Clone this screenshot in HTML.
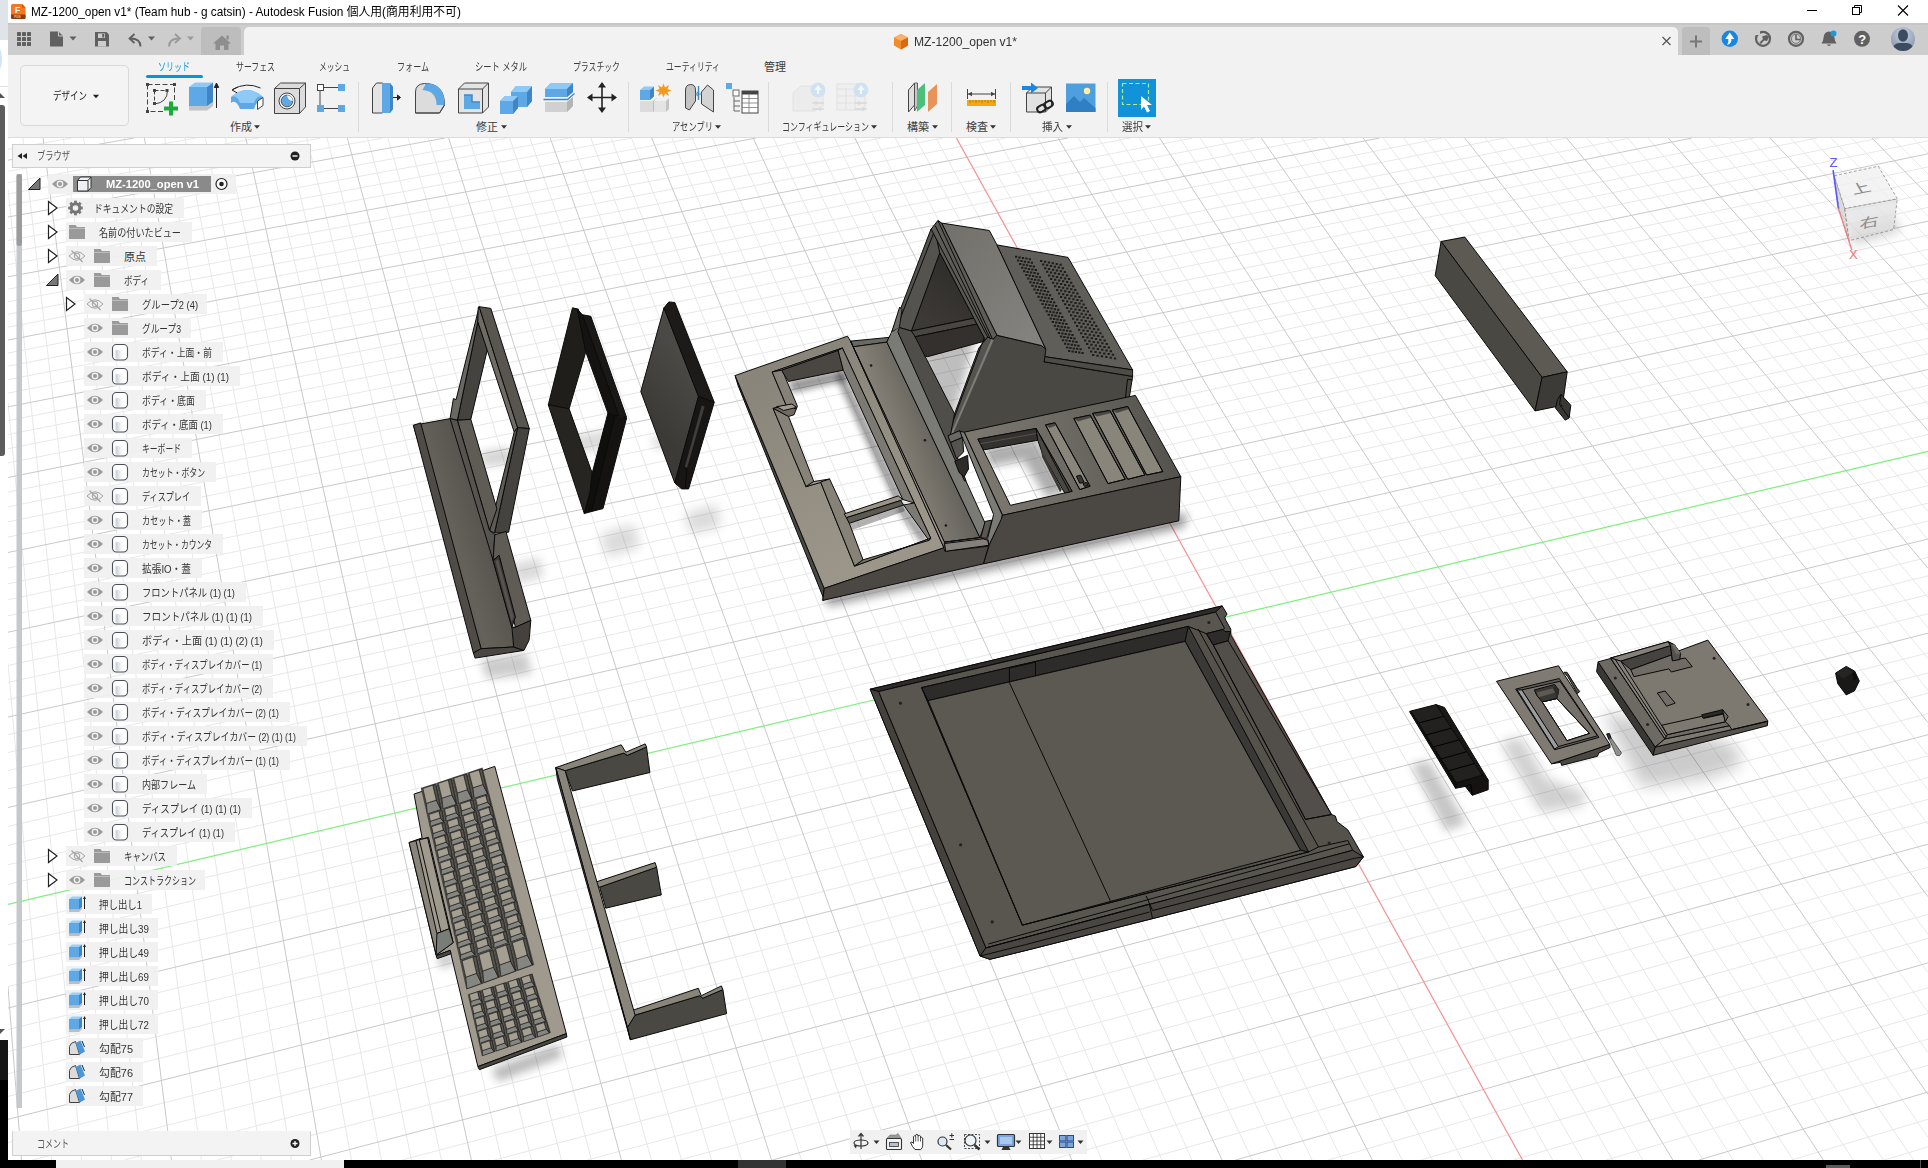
<!DOCTYPE html>
<html lang="ja"><head><meta charset="utf-8"><title>MZ-1200_open v1 - Autodesk Fusion</title>
<style>
*{box-sizing:border-box;margin:0;padding:0}
html,body{width:1928px;height:1168px;overflow:hidden;background:#fff}
body{font-family:"Liberation Sans","Noto Sans CJK JP",sans-serif;font-size:12px;color:#333;position:relative}
.abs{position:absolute}
.t{position:absolute;white-space:nowrap;transform-origin:0 50%;line-height:16px;height:16px}
#title{left:8px;top:0;width:1920px;height:23px;background:#fff}
#tabbar{left:8px;top:23px;width:1920px;height:32px;background:#cdcdcd}
#toolbar{left:8px;top:55px;width:1920px;height:83px;background:#f2f2f2;border-bottom:1px solid #dcdcdc}
.sep{position:absolute;top:82px;width:1px;height:50px;background:#dadada}
.tab{font-size:11px;color:#3c3c3c}
.lbl{font-size:11px;color:#3c3c3c}

.rowbg{position:absolute;height:20px;background:rgba(240,240,240,.92)}
.bt{font-size:11px;color:#333}
</style></head>
<body>
<svg class="abs" style="left:0;top:0" width="1928" height="1168" viewBox="0 0 1928 1168"><defs><filter id="b3" x="-30%" y="-30%" width="160%" height="160%"><feGaussianBlur stdDeviation="3"/></filter><filter id="b4" x="-30%" y="-30%" width="160%" height="160%"><feGaussianBlur stdDeviation="4"/></filter><filter id="b5" x="-30%" y="-30%" width="160%" height="160%"><feGaussianBlur stdDeviation="5"/></filter><filter id="b6" x="-30%" y="-30%" width="160%" height="160%"><feGaussianBlur stdDeviation="6"/></filter><filter id="b8" x="-30%" y="-30%" width="160%" height="160%"><feGaussianBlur stdDeviation="8"/></filter><clipPath id="vpc"><rect x="8" y="138" width="1920" height="1022"/></clipPath></defs><g clip-path="url(#vpc)"><path d="M8.0,663.4L51.5,1160.0M8.0,403.1L81.5,1160.0M8.0,189.3L111.4,1160.0M22.8,138.0L141.4,1160.0M63.3,138.0L201.4,1160.0M83.6,138.0L231.4,1160.0M103.9,138.0L261.4,1160.0M124.2,138.0L291.4,1160.0M164.7,138.0L351.4,1160.0M185.0,138.0L381.4,1160.0M205.3,138.0L411.4,1160.0M225.5,138.0L441.4,1160.0M266.1,138.0L501.4,1160.0M286.4,138.0L531.4,1160.0M306.7,138.0L561.4,1160.0M327.0,138.0L591.4,1160.0M367.5,138.0L651.4,1160.0M387.8,138.0L681.5,1160.0M408.1,138.0L711.5,1160.0M428.4,138.0L741.5,1160.0M469.0,138.0L801.5,1160.0M489.3,138.0L831.6,1160.0M509.6,138.0L861.6,1160.0M529.9,138.0L891.6,1160.0M570.5,138.0L951.7,1160.0M590.8,138.0L981.7,1160.0M611.1,138.0L1011.7,1160.0M631.4,138.0L1041.8,1160.0M672.0,138.0L1101.8,1160.0M692.3,138.0L1131.9,1160.0M712.6,138.0L1161.9,1160.0M732.9,138.0L1192.0,1160.0M773.5,138.0L1252.1,1160.0M793.8,138.0L1282.1,1160.0M814.1,138.0L1312.2,1160.0M834.5,138.0L1342.2,1160.0M875.1,138.0L1402.3,1160.0M895.4,138.0L1432.4,1160.0M915.7,138.0L1462.4,1160.0M936.0,138.0L1492.5,1160.0M976.7,138.0L1552.6,1160.0M997.0,138.0L1582.7,1160.0M1017.3,138.0L1612.7,1160.0M1037.7,138.0L1642.8,1160.0M1078.3,138.0L1703.0,1160.0M1098.6,138.0L1733.0,1160.0M1119.0,138.0L1763.1,1160.0M1139.3,138.0L1793.2,1160.0M1180.0,138.0L1853.3,1160.0M1200.3,138.0L1883.4,1160.0M1220.6,138.0L1913.5,1160.0M1241.0,138.0L1928.0,1137.3M1281.6,138.0L1928.0,1052.8M1302.0,138.0L1928.0,1012.2M1322.3,138.0L1928.0,972.7M1342.6,138.0L1928.0,934.2M1383.3,138.0L1928.0,860.1M1403.7,138.0L1928.0,824.4M1424.0,138.0L1928.0,789.7M1444.4,138.0L1928.0,755.7M1485.1,138.0L1928.0,690.3M1505.4,138.0L1928.0,658.7M1525.8,138.0L1928.0,627.9M1546.1,138.0L1928.0,597.7M1586.8,138.0L1928.0,539.5M1607.2,138.0L1928.0,511.3M1627.5,138.0L1928.0,483.8M1647.9,138.0L1928.0,456.9M1688.6,138.0L1928.0,404.7M1709.0,138.0L1928.0,379.5M1729.3,138.0L1928.0,354.7M1749.7,138.0L1928.0,330.5M1790.4,138.0L1928.0,283.5M1810.8,138.0L1928.0,260.7M1831.2,138.0L1928.0,238.4M1851.5,138.0L1928.0,216.5M1892.3,138.0L1928.0,174.0M1912.7,138.0L1928.0,153.3M8.0,138.3L9.8,138.0M8.0,149.2L71.9,138.0M8.0,171.3L196.3,138.0M8.0,182.6L258.5,138.0M8.0,193.9L320.7,138.0M8.0,205.4L382.9,138.0M8.0,228.7L507.4,138.0M8.0,240.5L569.6,138.0M8.0,252.5L631.9,138.0M8.0,264.6L694.2,138.0M8.0,289.2L818.7,138.0M8.0,301.7L881.0,138.0M8.0,314.3L943.4,138.0M8.0,327.1L1005.7,138.0M8.0,353.0L1130.4,138.0M8.0,366.2L1192.7,138.0M8.0,379.6L1255.1,138.0M8.0,393.1L1317.4,138.0M8.0,420.6L1442.2,138.0M8.0,434.5L1504.6,138.0M8.0,448.7L1567.1,138.0M8.0,463.0L1629.5,138.0M8.0,492.1L1754.4,138.0M8.0,506.9L1816.8,138.0M8.0,521.9L1879.3,138.0M8.0,537.1L1928.0,140.8M8.0,568.0L1928.0,167.0M8.0,583.8L1928.0,180.3M8.0,599.7L1928.0,193.8M8.0,615.8L1928.0,207.4M8.0,648.7L1928.0,235.2M8.0,665.5L1928.0,249.4M8.0,682.4L1928.0,263.7M8.0,699.6L1928.0,278.3M8.0,734.6L1928.0,307.9M8.0,752.5L1928.0,323.0M8.0,770.6L1928.0,338.3M8.0,788.9L1928.0,353.8M8.0,826.4L1928.0,385.4M8.0,845.4L1928.0,401.6M8.0,864.8L1928.0,417.9M8.0,884.4L1928.0,434.5M8.0,924.4L1928.0,468.4M8.0,944.9L1928.0,485.7M8.0,965.6L1928.0,503.2M8.0,986.6L1928.0,521.0M8.0,1029.6L1928.0,557.3M8.0,1051.5L1928.0,575.9M8.0,1073.8L1928.0,594.7M8.0,1096.4L1928.0,613.8M8.0,1142.6L1928.0,652.9M32.3,1160.0L1928.0,672.9M124.7,1160.0L1928.0,693.2M217.2,1160.0L1928.0,713.7M402.2,1160.0L1928.0,755.9M494.7,1160.0L1928.0,777.5M587.3,1160.0L1928.0,799.4M679.8,1160.0L1928.0,821.6M865.0,1160.0L1928.0,867.2M957.6,1160.0L1928.0,890.6M1050.2,1160.0L1928.0,914.3M1142.8,1160.0L1928.0,938.4M1328.1,1160.0L1928.0,987.9M1420.8,1160.0L1928.0,1013.3M1513.5,1160.0L1928.0,1039.1M1606.2,1160.0L1928.0,1065.3M1791.7,1160.0L1928.0,1119.2M1884.4,1160.0L1928.0,1146.8" stroke="#e8e8e8" stroke-width="1" fill="none"/><path d="M8.0,987.0L21.5,1160.0M43.1,138.0L171.4,1160.0M144.4,138.0L321.4,1160.0M245.8,138.0L471.4,1160.0M347.3,138.0L621.4,1160.0M448.7,138.0L771.5,1160.0M550.2,138.0L921.6,1160.0M651.7,138.0L1071.8,1160.0M753.2,138.0L1222.0,1160.0M854.8,138.0L1372.3,1160.0M1058.0,138.0L1672.9,1160.0M1159.6,138.0L1823.3,1160.0M1261.3,138.0L1928.0,1094.5M1363.0,138.0L1928.0,896.7M1464.7,138.0L1928.0,722.6M1566.5,138.0L1928.0,568.3M1668.3,138.0L1928.0,430.5M1770.1,138.0L1928.0,306.8M1871.9,138.0L1928.0,195.0M8.0,160.2L134.1,138.0M8.0,217.0L445.2,138.0M8.0,276.8L756.4,138.0M8.0,340.0L1068.0,138.0M8.0,406.8L1379.8,138.0M8.0,477.5L1691.9,138.0M8.0,552.5L1928.0,153.8M8.0,632.2L1928.0,221.2M8.0,717.0L1928.0,293.0M8.0,807.5L1928.0,369.5M8.0,1008.0L1928.0,539.0M8.0,1119.3L1928.0,633.2M309.7,1160.0L1928.0,734.7M772.4,1160.0L1928.0,844.2M1235.5,1160.0L1928.0,962.9M1698.9,1160.0L1928.0,1092.0" stroke="#c9c9c9" stroke-width="1" fill="none"/><path d="M8.0,904.3L1928.0,451.3" stroke="#7df07d" stroke-width="1.2"/><path d="M956.4,138.0L1522.5,1160.0" stroke="#f79090" stroke-width="1.2"/><polygon points="870.2,689.2 1222.2,605.9 1227.1,614.1 1224.8,617.3 1225.8,620.3 1230.8,629.2 1230.8,634.9 1331.5,814.5 1335.4,816.1 1337.1,821.7 1347.8,829.8 1363.4,856.8 1355.9,866.5 1152.6,918.6 1025.7,950.5 989.9,959.3 980.1,956.0" fill="#55524c" stroke="#0a0a0a" stroke-width="1" stroke-linejoin="round"/>
<polygon points="870.2,689.2 1222.2,605.9 1215.7,612.1 878.6,691.5" fill="#2e2c2a" stroke="#0a0a0a" stroke-width="1" stroke-linejoin="round"/>
<polygon points="870.2,689.2 878.6,691.5 986.0,947.9 980.1,956.0" fill="#45423e" stroke="#0a0a0a" stroke-width="1" stroke-linejoin="round"/>
<polygon points="878.6,691.5 1215.7,612.1 1224.5,628.1 1223.3,629.4 1206.3,633.6 1188.4,626.4 921.6,687.6 1022.4,925.1 1308.7,851.9 1318.5,847.0 1347.8,840.5 1352.7,850.3 986.0,947.9" fill="#595650" stroke="#0a0a0a" stroke-width="1" stroke-linejoin="round"/>
<polygon points="921.6,687.6 1188.4,626.4 1185.1,641.4 928.1,700.6" fill="#2e2c2a" stroke="#0a0a0a" stroke-width="1" stroke-linejoin="round"/>
<polygon points="1188.4,626.4 1308.7,851.9 1300.6,850.3 1185.1,641.4" fill="#3b3936" stroke="#0a0a0a" stroke-width="1" stroke-linejoin="round"/>
<polygon points="928.1,700.6 1185.1,641.4 1300.6,850.3 1022.4,925.1" fill="#5c5953" stroke="#0a0a0a" stroke-width="1" stroke-linejoin="round"/>
<polyline points="1009.4,682.7 1009.4,668.1 1035.5,662.2 1035.5,676.2" fill="none" stroke="#0a0a0a" stroke-width="1" stroke-linejoin="round"/>
<polyline points="1009.4,682.7 1110.3,900.7" fill="none" stroke="#0a0a0a" stroke-width="1" stroke-linejoin="round"/>
<polyline points="921.6,687.6 1022.4,925.1 1308.7,851.9" fill="none" stroke="#0a0a0a" stroke-width="1" stroke-linejoin="round"/>
<polygon points="1206.3,633.6 1223.3,629.4 1224.8,631.6 1230.3,631.5 1228.2,640.8 1213.3,645.0" fill="#2e2c2a" stroke="#0a0a0a" stroke-width="1" stroke-linejoin="round"/>
<polygon points="1213.3,645.0 1228.2,640.8 1331.5,814.5 1305.5,819.4" fill="#524f4a" stroke="#0a0a0a" stroke-width="1" stroke-linejoin="round"/>
<polyline points="1206.3,633.6 1213.3,645.0 1305.5,819.4 1331.5,814.5" fill="none" stroke="#0a0a0a" stroke-width="1" stroke-linejoin="round"/>
<polyline points="1198.1,629.0 1318.5,847.0" fill="none" stroke="#0a0a0a" stroke-width="1" stroke-linejoin="round"/>
<polygon points="986.0,947.9 1352.7,850.3 1363.4,856.8 1355.9,866.5 1152.6,918.6 1025.7,950.5 989.9,959.3 980.1,956.0" fill="#4a4742" stroke="#0a0a0a" stroke-width="1" stroke-linejoin="round"/>
<polyline points="988.3,944.0 1349.4,843.8" fill="none" stroke="#0a0a0a" stroke-width="1" stroke-linejoin="round"/>
<polyline points="986.0,947.9 1149.3,904.0 1152.6,918.6" fill="none" stroke="#0a0a0a" stroke-width="1" stroke-linejoin="round"/>
<polyline points="1146.1,895.8 1152.6,910.5 1354.3,858.4 1363.4,856.8" fill="none" stroke="#0a0a0a" stroke-width="1" stroke-linejoin="round"/>
<polyline points="980.1,956.0 1025.7,944.6 1149.3,912.1" fill="none" stroke="#0a0a0a" stroke-width="1" stroke-linejoin="round"/>
<circle cx="900.4" cy="703.2" r="1.6" fill="#222"/>
<circle cx="960.6" cy="844.8" r="1.6" fill="#222"/>
<circle cx="992.2" cy="921.9" r="1.6" fill="#222"/>
<circle cx="1208.9" cy="622.5" r="1.6" fill="#222"/>
<circle cx="1329.2" cy="843.1" r="1.6" fill="#222"/>
<defs><linearGradient id="gpan" gradientUnits="userSpaceOnUse" x1="870" y1="420" x2="935" y2="395"><stop offset="0" stop-color="#8e897e"/><stop offset="1" stop-color="#5d5b56"/></linearGradient><linearGradient id="gtop" gradientUnits="userSpaceOnUse" x1="940" y1="225" x2="1050" y2="345"><stop offset="0" stop-color="#71706a"/><stop offset="1" stop-color="#868480"/></linearGradient><linearGradient id="gdeck" gradientUnits="userSpaceOnUse" x1="980" y1="480" x2="1170" y2="440"><stop offset="0" stop-color="#7c7870"/><stop offset=".5" stop-color="#6c6962"/><stop offset="1" stop-color="#55534e"/></linearGradient><linearGradient id="gsur" gradientUnits="userSpaceOnUse" x1="760" y1="380" x2="860" y2="560"><stop offset="0" stop-color="#8a857a"/><stop offset="1" stop-color="#9c968a"/></linearGradient><linearGradient id="gint" gradientUnits="userSpaceOnUse" x1="915" y1="330" x2="970" y2="260"><stop offset="0" stop-color="#3f3c38"/><stop offset="1" stop-color="#2d2b28"/></linearGradient></defs>
<polygon points="827.9,606.5 1184.0,527.3 1187.6,512.9 1166.0,516.5 824.3,595.7" fill="#000" opacity="0.4" filter="url(#b5)"/>
<polygon points="788.0,381.0 843.0,369.0 848.0,380.0 792.0,393.0" fill="#000" opacity="0.4" filter="url(#b3)"/>
<polygon points="842.0,369.0 904.0,499.0 895.0,502.0 836.0,378.0" fill="#000" opacity="0.4" filter="url(#b3)"/>
<polygon points="903.0,504.0 930.0,540.0 921.0,543.0 896.0,508.0" fill="#000" opacity="0.4" filter="url(#b3)"/>
<polygon points="849.0,523.0 903.0,505.0 905.0,511.0 852.0,530.0" fill="#000" opacity="0.3" filter="url(#b2)"/>
<polygon points="983.9,447.6 1037.0,439.1 1064.4,491.3 1047.3,498.2 1023.3,460.5 989.0,466.5" fill="#000" opacity="0.32" filter="url(#b5)"/>
<polygon points="921.4,336.7 979.0,325.9 950.2,430.2 971.8,523.7 943.0,523.7" fill="#000" opacity="0.25" filter="url(#b4)"/>
<polygon points="939.6,252.2 973.9,318.2 911.4,331.0" fill="url(#gint)" stroke="#0a0a0a" stroke-width="1" stroke-linejoin="round"/>
<polygon points="911.4,331.0 973.9,318.2 976.8,324.1 913.9,337.0" fill="#4a4742" stroke="#0a0a0a" stroke-width="1" stroke-linejoin="round"/>
<polygon points="913.9,337.0 976.8,324.1 985.9,340.8 927.6,356.7 919.9,355.0" fill="#33302d" stroke="#0a0a0a" stroke-width="1" stroke-linejoin="round"/>
<polygon points="931.1,228.8 935.3,232.2 940.1,251.9 911.4,331.0 899.4,327.6 891.7,332.2" fill="#55534e" stroke="#0a0a0a" stroke-width="1" stroke-linejoin="round"/>
<polyline points="934.0,232.2 895.6,330.5" fill="none" stroke="#0a0a0a" stroke-width="1" stroke-linejoin="round"/>
<polygon points="891.7,332.2 899.4,327.6 902.0,309.6 899.7,307.0" fill="#6b6a65" stroke="#0a0a0a" stroke-width="1" stroke-linejoin="round"/>
<polygon points="935.3,231.8 991.8,338.0 985.9,340.8 973.9,318.2 939.6,252.2" fill="#5a5853" stroke="#0a0a0a" stroke-width="1" stroke-linejoin="round"/>
<polygon points="931.1,229.1 937.9,220.5 941.8,223.1 997.0,335.3 992.7,339.6 987.6,337.0" fill="#5d5c57" stroke="#0a0a0a" stroke-width="1" stroke-linejoin="round"/>
<polyline points="937.9,220.5 992.7,339.6" fill="none" stroke="#0a0a0a" stroke-width="1" stroke-linejoin="round"/>
<polyline points="935.3,225.7 990.1,338.4" fill="none" stroke="#0a0a0a" stroke-width="1" stroke-linejoin="round"/>
<polygon points="992.7,339.6 997.0,335.3 1041.2,345.5 1047.5,347.0 1046.0,356.7 1044.1,361.8 1132.6,376.4 1129.4,397.1 960.3,434.5 950.2,437.4" fill="#4a4843" stroke="#0a0a0a" stroke-width="1" stroke-linejoin="round"/>
<polyline points="1132.6,380.0 1127.5,379.2 1125.5,397.5" fill="none" stroke="#0a0a0a" stroke-width="1" stroke-linejoin="round"/>
<polygon points="978.9,348.0 987.6,337.0 992.7,339.6 950.2,437.4 943.7,435.6 954.5,413.9" fill="#55534e" stroke="#0a0a0a" stroke-width="1" stroke-linejoin="round"/>
<polyline points="984.0,338.1 949.0,432.0" fill="none" stroke="#0a0a0a" stroke-width="1" stroke-linejoin="round"/>
<polygon points="991.5,339.0 993.6,340.0 951.3,437.4 949.5,436.8" fill="#7d7d78"/>
<polygon points="941.8,223.1 989.3,230.5 997.0,244.9 1045.8,349.0 1041.2,345.5 997.0,335.3" fill="url(#gtop)" stroke="#0a0a0a" stroke-width="1" stroke-linejoin="round"/>
<polygon points="997.0,244.9 1068.0,257.4 1132.6,369.9 1044.9,356.7 1045.8,349.0" fill="#605e59" stroke="#0a0a0a" stroke-width="1" stroke-linejoin="round"/>
<path d="M1015.0,255.8h2.300v2h-2.300zM1018.4,256.4h2.300v2h-2.300zM1021.8,257.0h2.300v2h-2.300zM1025.2,257.6h2.300v2h-2.300zM1028.7,258.2h2.300v2h-2.300zM1017.0,259.5h2.300v2h-2.300zM1020.4,260.1h2.300v2h-2.300zM1023.8,260.7h2.300v2h-2.300zM1027.3,261.3h2.300v2h-2.300zM1030.7,261.8h2.300v2h-2.300zM1019.0,263.1h2.300v2h-2.300zM1022.5,263.7h2.300v2h-2.300zM1025.9,264.3h2.300v2h-2.300zM1029.3,264.9h2.300v2h-2.300zM1032.7,265.5h2.300v2h-2.300zM1021.1,266.7h2.300v2h-2.300zM1024.5,267.3h2.300v2h-2.300zM1027.9,267.9h2.300v2h-2.300zM1031.3,268.5h2.300v2h-2.300zM1034.7,269.1h2.300v2h-2.300zM1023.1,270.3h2.300v2h-2.300zM1026.5,270.9h2.300v2h-2.300zM1030.0,271.5h2.300v2h-2.300zM1033.4,272.1h2.300v2h-2.300zM1036.8,272.7h2.300v2h-2.300zM1025.2,274.0h2.300v2h-2.300zM1028.6,274.5h2.300v2h-2.300zM1032.0,275.1h2.300v2h-2.300zM1035.4,275.7h2.300v2h-2.300zM1038.8,276.3h2.300v2h-2.300zM1027.2,277.6h2.300v2h-2.300zM1030.6,278.2h2.300v2h-2.300zM1034.0,278.7h2.300v2h-2.300zM1037.4,279.3h2.300v2h-2.300zM1040.8,279.9h2.300v2h-2.300zM1029.3,281.2h2.300v2h-2.300zM1032.7,281.8h2.300v2h-2.300zM1036.1,282.3h2.300v2h-2.300zM1039.5,282.9h2.300v2h-2.300zM1042.9,283.5h2.300v2h-2.300zM1031.3,284.8h2.300v2h-2.300zM1034.7,285.4h2.300v2h-2.300zM1038.1,285.9h2.300v2h-2.300zM1041.5,286.5h2.300v2h-2.300zM1044.9,287.1h2.300v2h-2.300zM1033.3,288.4h2.300v2h-2.300zM1036.7,289.0h2.300v2h-2.300zM1040.1,289.6h2.300v2h-2.300zM1043.5,290.1h2.300v2h-2.300zM1046.9,290.7h2.300v2h-2.300zM1035.4,292.1h2.300v2h-2.300zM1038.8,292.6h2.300v2h-2.300zM1042.2,293.2h2.300v2h-2.300zM1045.6,293.7h2.300v2h-2.300zM1048.9,294.3h2.300v2h-2.300zM1037.4,295.7h2.300v2h-2.300zM1040.8,296.2h2.300v2h-2.300zM1044.2,296.8h2.300v2h-2.300zM1047.6,297.3h2.300v2h-2.300zM1051.0,297.9h2.300v2h-2.300zM1039.5,299.3h2.300v2h-2.300zM1042.8,299.9h2.300v2h-2.300zM1046.2,300.4h2.300v2h-2.300zM1049.6,300.9h2.300v2h-2.300zM1053.0,301.5h2.300v2h-2.300zM1041.5,302.9h2.300v2h-2.300zM1044.9,303.5h2.300v2h-2.300zM1048.3,304.0h2.300v2h-2.300zM1051.7,304.5h2.300v2h-2.300zM1055.0,305.1h2.300v2h-2.300zM1043.5,306.6h2.300v2h-2.300zM1046.9,307.1h2.300v2h-2.300zM1050.3,307.6h2.300v2h-2.300zM1053.7,308.2h2.300v2h-2.300zM1057.1,308.7h2.300v2h-2.300zM1045.6,310.2h2.300v2h-2.300zM1049.0,310.7h2.300v2h-2.300zM1052.3,311.2h2.300v2h-2.300zM1055.7,311.8h2.300v2h-2.300zM1059.1,312.3h2.300v2h-2.300zM1047.6,313.8h2.300v2h-2.300zM1051.0,314.3h2.300v2h-2.300zM1054.4,314.8h2.300v2h-2.300zM1057.7,315.4h2.300v2h-2.300zM1061.1,315.9h2.300v2h-2.300zM1049.7,317.4h2.300v2h-2.300zM1053.0,317.9h2.300v2h-2.300zM1056.4,318.5h2.300v2h-2.300zM1059.8,319.0h2.300v2h-2.300zM1063.1,319.5h2.300v2h-2.300zM1051.7,321.0h2.300v2h-2.300zM1055.1,321.6h2.300v2h-2.300zM1058.4,322.1h2.300v2h-2.300zM1061.8,322.6h2.300v2h-2.300zM1065.2,323.1h2.300v2h-2.300zM1053.8,324.7h2.300v2h-2.300zM1057.1,325.2h2.300v2h-2.300zM1060.5,325.7h2.300v2h-2.300zM1063.8,326.2h2.300v2h-2.300zM1067.2,326.7h2.300v2h-2.300zM1055.8,328.3h2.300v2h-2.300zM1059.2,328.8h2.300v2h-2.300zM1062.5,329.3h2.300v2h-2.300zM1065.9,329.8h2.300v2h-2.300zM1069.2,330.3h2.300v2h-2.300zM1057.8,331.9h2.300v2h-2.300zM1061.2,332.4h2.300v2h-2.300zM1064.5,332.9h2.300v2h-2.300zM1067.9,333.4h2.300v2h-2.300zM1071.3,333.9h2.300v2h-2.300zM1059.9,335.5h2.300v2h-2.300zM1063.2,336.0h2.300v2h-2.300zM1066.6,336.5h2.300v2h-2.300zM1069.9,337.0h2.300v2h-2.300zM1073.3,337.5h2.300v2h-2.300zM1061.9,339.2h2.300v2h-2.300zM1065.3,339.6h2.300v2h-2.300zM1068.6,340.1h2.300v2h-2.300zM1072.0,340.6h2.300v2h-2.300zM1075.3,341.1h2.300v2h-2.300zM1064.0,342.8h2.300v2h-2.300zM1067.3,343.3h2.300v2h-2.300zM1070.7,343.7h2.300v2h-2.300zM1074.0,344.2h2.300v2h-2.300zM1077.3,344.7h2.300v2h-2.300zM1066.0,346.4h2.300v2h-2.300zM1069.3,346.9h2.300v2h-2.300zM1072.7,347.4h2.300v2h-2.300zM1076.0,347.8h2.300v2h-2.300zM1079.4,348.3h2.300v2h-2.300zM1068.0,350.0h2.300v2h-2.300zM1071.4,350.5h2.300v2h-2.300zM1074.7,351.0h2.300v2h-2.300zM1078.1,351.4h2.300v2h-2.300zM1081.4,351.9h2.300v2h-2.300z" fill="#1d1c1a"/>
<path d="M1040.0,260.0h2.300v2h-2.300zM1043.9,260.7h2.300v2h-2.300zM1047.8,261.5h2.300v2h-2.300zM1051.7,262.2h2.300v2h-2.300zM1055.6,263.0h2.300v2h-2.300zM1059.5,263.7h2.300v2h-2.300zM1042.0,263.6h2.300v2h-2.300zM1045.9,264.3h2.300v2h-2.300zM1049.8,265.1h2.300v2h-2.300zM1053.7,265.8h2.300v2h-2.300zM1057.7,266.6h2.300v2h-2.300zM1061.6,267.3h2.300v2h-2.300zM1044.0,267.2h2.300v2h-2.300zM1047.9,267.9h2.300v2h-2.300zM1051.9,268.7h2.300v2h-2.300zM1055.8,269.4h2.300v2h-2.300zM1059.7,270.2h2.300v2h-2.300zM1063.7,270.9h2.300v2h-2.300zM1046.0,270.8h2.300v2h-2.300zM1049.9,271.6h2.300v2h-2.300zM1053.9,272.3h2.300v2h-2.300zM1057.8,273.0h2.300v2h-2.300zM1061.8,273.8h2.300v2h-2.300zM1065.8,274.5h2.300v2h-2.300zM1048.0,274.4h2.300v2h-2.300zM1052.0,275.2h2.300v2h-2.300zM1055.9,275.9h2.300v2h-2.300zM1059.9,276.7h2.300v2h-2.300zM1063.9,277.4h2.300v2h-2.300zM1067.9,278.1h2.300v2h-2.300zM1050.0,278.0h2.300v2h-2.300zM1054.0,278.8h2.300v2h-2.300zM1058.0,279.5h2.300v2h-2.300zM1062.0,280.3h2.300v2h-2.300zM1066.0,281.0h2.300v2h-2.300zM1070.0,281.7h2.300v2h-2.300zM1052.0,281.7h2.300v2h-2.300zM1056.0,282.4h2.300v2h-2.300zM1060.0,283.1h2.300v2h-2.300zM1064.0,283.9h2.300v2h-2.300zM1068.0,284.6h2.300v2h-2.300zM1072.1,285.3h2.300v2h-2.300zM1054.0,285.3h2.300v2h-2.300zM1058.0,286.0h2.300v2h-2.300zM1062.0,286.7h2.300v2h-2.300zM1066.1,287.5h2.300v2h-2.300zM1070.1,288.2h2.300v2h-2.300zM1074.1,288.9h2.300v2h-2.300zM1056.0,288.9h2.300v2h-2.300zM1060.0,289.6h2.300v2h-2.300zM1064.1,290.3h2.300v2h-2.300zM1068.1,291.1h2.300v2h-2.300zM1072.2,291.8h2.300v2h-2.300zM1076.2,292.5h2.300v2h-2.300zM1058.0,292.5h2.300v2h-2.300zM1062.1,293.2h2.300v2h-2.300zM1066.1,294.0h2.300v2h-2.300zM1070.2,294.7h2.300v2h-2.300zM1074.3,295.4h2.300v2h-2.300zM1078.3,296.1h2.300v2h-2.300zM1060.0,296.1h2.300v2h-2.300zM1064.1,296.8h2.300v2h-2.300zM1068.2,297.6h2.300v2h-2.300zM1072.3,298.3h2.300v2h-2.300zM1076.3,299.0h2.300v2h-2.300zM1080.4,299.8h2.300v2h-2.300zM1062.0,299.7h2.300v2h-2.300zM1066.1,300.5h2.300v2h-2.300zM1070.2,301.2h2.300v2h-2.300zM1074.3,301.9h2.300v2h-2.300zM1078.4,302.6h2.300v2h-2.300zM1082.5,303.4h2.300v2h-2.300zM1064.0,303.3h2.300v2h-2.300zM1068.1,304.1h2.300v2h-2.300zM1072.2,304.8h2.300v2h-2.300zM1076.4,305.5h2.300v2h-2.300zM1080.5,306.2h2.300v2h-2.300zM1084.6,307.0h2.300v2h-2.300zM1066.0,307.0h2.300v2h-2.300zM1070.1,307.7h2.300v2h-2.300zM1074.3,308.4h2.300v2h-2.300zM1078.4,309.1h2.300v2h-2.300zM1082.6,309.8h2.300v2h-2.300zM1086.7,310.6h2.300v2h-2.300zM1068.0,310.6h2.300v2h-2.300zM1072.2,311.3h2.300v2h-2.300zM1076.3,312.0h2.300v2h-2.300zM1080.5,312.7h2.300v2h-2.300zM1084.6,313.4h2.300v2h-2.300zM1088.8,314.2h2.300v2h-2.300zM1070.0,314.2h2.300v2h-2.300zM1074.2,314.9h2.300v2h-2.300zM1078.4,315.6h2.300v2h-2.300zM1082.5,316.3h2.300v2h-2.300zM1086.7,317.0h2.300v2h-2.300zM1090.9,317.8h2.300v2h-2.300zM1072.0,317.8h2.300v2h-2.300zM1076.2,318.5h2.300v2h-2.300zM1080.4,319.2h2.300v2h-2.300zM1084.6,319.9h2.300v2h-2.300zM1088.8,320.7h2.300v2h-2.300zM1093.0,321.4h2.300v2h-2.300zM1074.0,321.4h2.300v2h-2.300zM1078.2,322.1h2.300v2h-2.300zM1082.4,322.8h2.300v2h-2.300zM1086.7,323.6h2.300v2h-2.300zM1090.9,324.3h2.300v2h-2.300zM1095.1,325.0h2.300v2h-2.300zM1076.0,325.0h2.300v2h-2.300zM1080.2,325.7h2.300v2h-2.300zM1084.5,326.5h2.300v2h-2.300zM1088.7,327.2h2.300v2h-2.300zM1092.9,327.9h2.300v2h-2.300zM1097.2,328.6h2.300v2h-2.300zM1078.0,328.7h2.300v2h-2.300zM1082.3,329.4h2.300v2h-2.300zM1086.5,330.1h2.300v2h-2.300zM1090.8,330.8h2.300v2h-2.300zM1095.0,331.5h2.300v2h-2.300zM1099.3,332.2h2.300v2h-2.300zM1080.0,332.3h2.300v2h-2.300zM1084.3,333.0h2.300v2h-2.300zM1088.6,333.7h2.300v2h-2.300zM1092.8,334.4h2.300v2h-2.300zM1097.1,335.1h2.300v2h-2.300zM1101.4,335.8h2.300v2h-2.300zM1082.0,335.9h2.300v2h-2.300zM1086.3,336.6h2.300v2h-2.300zM1090.6,337.3h2.300v2h-2.300zM1094.9,338.0h2.300v2h-2.300zM1099.2,338.7h2.300v2h-2.300zM1103.5,339.4h2.300v2h-2.300zM1084.0,339.5h2.300v2h-2.300zM1088.3,340.2h2.300v2h-2.300zM1092.6,340.9h2.300v2h-2.300zM1096.9,341.6h2.300v2h-2.300zM1101.2,342.3h2.300v2h-2.300zM1105.6,343.0h2.300v2h-2.300zM1086.0,343.1h2.300v2h-2.300zM1090.3,343.8h2.300v2h-2.300zM1094.7,344.5h2.300v2h-2.300zM1099.0,345.2h2.300v2h-2.300zM1103.3,345.9h2.300v2h-2.300zM1107.7,346.6h2.300v2h-2.300zM1088.0,346.7h2.300v2h-2.300zM1092.4,347.4h2.300v2h-2.300zM1096.7,348.1h2.300v2h-2.300zM1101.1,348.8h2.300v2h-2.300zM1105.4,349.5h2.300v2h-2.300zM1109.7,350.2h2.300v2h-2.300zM1090.0,350.4h2.300v2h-2.300zM1094.4,351.0h2.300v2h-2.300zM1098.7,351.7h2.300v2h-2.300zM1103.1,352.4h2.300v2h-2.300zM1107.5,353.1h2.300v2h-2.300zM1111.8,353.8h2.300v2h-2.300zM1092.0,354.0h2.300v2h-2.300zM1096.4,354.7h2.300v2h-2.300zM1100.8,355.3h2.300v2h-2.300zM1105.2,356.0h2.300v2h-2.300zM1109.6,356.7h2.300v2h-2.300zM1113.9,357.4h2.300v2h-2.300z" fill="#1d1c1a"/>
<polygon points="1044.9,356.7 1132.6,369.9 1132.6,376.4 1044.1,361.8" fill="#4e4c47" stroke="#0a0a0a" stroke-width="1" stroke-linejoin="round"/>
<path d="M964.2,432.2 L1135.4,395.4 L1180.8,476.7 L1002.7,515.3ZM977.9,439.1 L1036.1,428.5 L1072.1,491.3 L1010.4,505.3Z" fill="url(#gdeck)" fill-rule="evenodd" stroke="#0a0a0a" stroke-width="1" stroke-linejoin="round"/>
<polygon points="977.9,439.1 1036.1,428.5 1037.8,440.3 983.6,449.9" fill="#34322f" stroke="#0a0a0a" stroke-width="1" stroke-linejoin="round"/>
<polyline points="980.5,443.7 1037.0,433.4" fill="none" stroke="#55534e" stroke-width="1" stroke-linejoin="round"/>
<polygon points="1036.1,428.5 1072.1,491.3 1064.7,493.0 1043.0,455.3 1037.8,440.3" fill="#4a4843" stroke="#0a0a0a" stroke-width="1" stroke-linejoin="round"/>
<polyline points="1039.6,434.8 1069.5,491.6" fill="none" stroke="#0a0a0a" stroke-width="1" stroke-linejoin="round"/>
<polygon points="1040.9,448.5 1043.8,455.3 1061.8,489.6 1060.1,492.2 1042.1,457.1" fill="#3a3835"/>
<polygon points="1045.5,424.9 1055.0,422.8 1090.1,486.2 1079.8,489.6" fill="#8a857b" stroke="#0a0a0a" stroke-width="1" stroke-linejoin="round"/>
<polygon points="1045.5,424.9 1055.0,422.8 1056.3,425.2 1049.8,427.9" fill="#4a4843"/>
<polyline points="1045.5,424.9 1055.0,422.8 1090.1,486.2 1079.8,489.6 1045.5,424.9" fill="none" stroke="#0a0a0a" stroke-width="1" stroke-linejoin="round"/>
<polygon points="1073.8,418.5 1090.1,415.1 1125.2,479.3 1108.0,483.6" fill="#8a857b" stroke="#0a0a0a" stroke-width="1" stroke-linejoin="round"/>
<polygon points="1073.8,418.5 1090.1,415.1 1091.4,417.5 1078.1,421.6" fill="#4a4843"/>
<polyline points="1073.8,418.5 1090.1,415.1 1125.2,479.3 1108.0,483.6 1073.8,418.5" fill="none" stroke="#0a0a0a" stroke-width="1" stroke-linejoin="round"/>
<polygon points="1092.6,413.4 1109.8,410.5 1144.9,475.0 1127.7,479.3" fill="#8a857b" stroke="#0a0a0a" stroke-width="1" stroke-linejoin="round"/>
<polygon points="1092.6,413.4 1109.8,410.5 1111.1,412.9 1096.9,416.5" fill="#4a4843"/>
<polyline points="1092.6,413.4 1109.8,410.5 1144.9,475.0 1127.7,479.3 1092.6,413.4" fill="none" stroke="#0a0a0a" stroke-width="1" stroke-linejoin="round"/>
<polygon points="1112.3,410.0 1127.7,406.5 1162.8,471.6 1146.6,475.0" fill="#8a857b" stroke="#0a0a0a" stroke-width="1" stroke-linejoin="round"/>
<polygon points="1112.3,410.0 1127.7,406.5 1129.1,408.9 1116.6,413.0" fill="#4a4843"/>
<polyline points="1112.3,410.0 1127.7,406.5 1162.8,471.6 1146.6,475.0 1112.3,410.0" fill="none" stroke="#0a0a0a" stroke-width="1" stroke-linejoin="round"/>
<polygon points="1076.4,476.2 1080.7,475.2 1084.1,482.1 1079.8,483.3" fill="#3a3835" stroke="#0a0a0a" stroke-width="1" stroke-linejoin="round"/>
<polygon points="1082.9,483.4 1086.6,482.4 1088.4,485.5 1084.6,486.5" fill="#3a3835" stroke="#0a0a0a" stroke-width="1" stroke-linejoin="round"/>
<polygon points="1002.4,515.3 1180.8,476.7 1178.8,520.8 983.4,563.9 989.4,544.4" fill="#4b4844" stroke="#0a0a0a" stroke-width="1" stroke-linejoin="round"/>
<polygon points="735.1,375.5 738.0,385.3 824.3,600.0 822.8,600.4 824.2,588.4" fill="#4a4843" stroke="#0a0a0a" stroke-width="1" stroke-linejoin="round"/>
<path d="M735.1,375.5 L847.5,336.2 L850.6,341.1 L944.0,547.8 L824.2,588.4ZM772.2,372.0 L842.4,348.0 L930.7,538.2 L854.5,566.1 L820.6,482.0 L806.1,486.7 L773.1,408.4 L786.2,405.3Z" fill="url(#gsur)" fill-rule="evenodd" stroke="#0a0a0a" stroke-width="1" stroke-linejoin="round"/>
<polygon points="772.2,372.0 842.4,348.0 838.2,350.5 781.6,370.2" fill="#9a9488" stroke="#0a0a0a" stroke-width="1" stroke-linejoin="round"/>
<polygon points="781.6,370.2 838.2,350.5 843.3,370.2 788.5,381.4 784.2,374.9" fill="#4a4742" stroke="#0a0a0a" stroke-width="1" stroke-linejoin="round"/>
<polygon points="842.4,348.0 838.2,350.5 843.3,370.2 902.9,499.5 913.9,503.0 903.6,505.0 929.0,540.4 930.7,538.2" fill="#7d7a73" stroke="#0a0a0a" stroke-width="1" stroke-linejoin="round"/>
<polygon points="772.2,372.0 781.6,370.2 784.2,374.9 797.4,406.2 796.2,409.1 786.2,405.3" fill="#878278" stroke="#0a0a0a" stroke-width="1" stroke-linejoin="round"/>
<polygon points="773.1,408.4 786.2,405.3 796.2,409.1 794.0,414.8 788.5,416.5" fill="#6f6b63" stroke="#0a0a0a" stroke-width="1" stroke-linejoin="round"/>
<polygon points="776.5,406.7 791.9,404.0 796.7,407.4 783.7,410.5" fill="#a09a8e" stroke="#0a0a0a" stroke-width="1" stroke-linejoin="round"/>
<polygon points="773.1,408.4 788.5,416.5 813.8,481.5 806.1,486.7" fill="#878278" stroke="#0a0a0a" stroke-width="1" stroke-linejoin="round"/>
<polygon points="805.6,486.7 813.8,481.5 829.6,479.0 821.0,482.4" fill="#a09a8e" stroke="#0a0a0a" stroke-width="1" stroke-linejoin="round"/>
<polygon points="820.6,482.0 829.6,479.0 845.9,514.1 849.3,523.3 863.0,559.8 854.5,566.1" fill="#878278" stroke="#0a0a0a" stroke-width="1" stroke-linejoin="round"/>
<polygon points="854.5,566.1 863.0,559.8 929.0,540.4 930.7,538.2" fill="#77736a" stroke="#0a0a0a" stroke-width="1" stroke-linejoin="round"/>
<polygon points="844.2,513.9 898.2,495.9 902.9,499.5 900.7,500.5 846.4,517.7" fill="#9a9488" stroke="#0a0a0a" stroke-width="1" stroke-linejoin="round"/>
<polygon points="846.4,517.7 900.7,500.5 903.6,505.0 849.3,523.3" fill="#5c5953" stroke="#0a0a0a" stroke-width="1" stroke-linejoin="round"/>
<polygon points="850.6,341.1 889.0,337.4 886.9,342.1 853.2,346.8" fill="#6a6862" stroke="#0a0a0a" stroke-width="1" stroke-linejoin="round"/>
<polygon points="853.2,346.8 886.9,342.1 979.9,537.6 944.4,542.2" fill="url(#gpan)" stroke="#0a0a0a" stroke-width="1" stroke-linejoin="round"/>
<polygon points="850.6,341.1 853.2,346.8 944.4,542.2 944.0,547.8" fill="#9b9589" stroke="#0a0a0a" stroke-width="1" stroke-linejoin="round"/>
<polygon points="944.4,542.2 979.9,537.6 987.6,540.2 988.9,545.3 945.7,551.3" fill="#85817a" stroke="#0a0a0a" stroke-width="1" stroke-linejoin="round"/>
<polyline points="944.4,542.2 979.9,537.6" fill="none" stroke="#0a0a0a" stroke-width="1" stroke-linejoin="round"/>
<polygon points="886.9,342.1 889.0,337.4 892.6,330.2 895.0,333.5 897.8,331.7 985.1,523.1 979.9,537.6" fill="#7b7b76" stroke="#0a0a0a" stroke-width="1" stroke-linejoin="round"/>
<polygon points="890.5,333.5 899.4,327.2 898.5,332.5 894.5,334.5" fill="#7b7b76"/>
<polygon points="897.8,331.7 899.4,327.6 911.4,331.0 914.2,335.1 954.5,413.9 950.0,437.0 966.0,481.0 964.5,481.0" fill="#504e49" stroke="#0a0a0a" stroke-width="1" stroke-linejoin="round"/>
<polygon points="947.9,435.7 959.9,430.5 962.5,437.4 950.5,442.5" fill="#6a6862" stroke="#0a0a0a" stroke-width="1" stroke-linejoin="round"/>
<polygon points="950.5,442.5 962.5,437.4 963.7,451.9 956.5,458.8" fill="#55534e" stroke="#0a0a0a" stroke-width="1" stroke-linejoin="round"/>
<polygon points="954.8,461.3 967.6,455.3 968.5,469.0 964.2,476.7 959.1,472.5" fill="#2d2b28" stroke="#0a0a0a" stroke-width="1" stroke-linejoin="round"/>
<polygon points="959.9,431.4 964.2,432.2 1002.2,514.8 1001.3,519.2 989.3,544.5 988.9,544.5 987.6,538.5 993.6,514.5" fill="#7b7b76" stroke="#0a0a0a" stroke-width="1" stroke-linejoin="round"/>
<polygon points="985.1,521.4 991.9,520.1 986.8,538.5 980.8,537.6" fill="#5a5751" stroke="#0a0a0a" stroke-width="1" stroke-linejoin="round"/>
<polygon points="824.2,588.4 944.0,547.8 944.8,551.3 988.5,546.2 983.4,563.8 822.8,600.4" fill="#4b4844" stroke="#0a0a0a" stroke-width="1" stroke-linejoin="round"/>
<polygon points="944.6,543.5 983.0,538.8 987.6,540.2 988.9,545.3 945.7,551.3" fill="#85817a" stroke="#0a0a0a" stroke-width="1" stroke-linejoin="round"/>
<circle cx="871.1" cy="365.5" r="1.3" fill="#1a1a1a"/>
<circle cx="925.0" cy="440.3" r="1.3" fill="#1a1a1a"/>
<circle cx="945.9" cy="525.5" r="1.3" fill="#1a1a1a"/>
<polygon points="478.5,452.0 510.2,447.0 513.6,463.7 483.5,467.0" fill="#000" opacity="0.16" filter="url(#b4)"/>
<polygon points="510.2,563.9 540.3,557.2 543.6,577.2 516.9,583.9" fill="#000" opacity="0.14" filter="url(#b5)"/>
<polygon points="480.2,659.1 526.9,652.4 531.9,674.1 486.8,679.1" fill="#000" opacity="0.2" filter="url(#b5)"/>
<polygon points="477.8,321.7 487.5,349.1 470.8,419.3 457.4,420.3" fill="#45433f" stroke="#0a0a0a" stroke-width="1" stroke-linejoin="round"/>
<polygon points="479.2,306.7 477.8,321.7 457.4,420.3 450.1,418.6 453.4,398.6 456.1,399.6" fill="#6a6862" stroke="#0a0a0a" stroke-width="1" stroke-linejoin="round"/>
<polygon points="478.2,307.4 479.2,306.7 517.6,427.6 514.2,432.0 477.8,321.7" fill="#6d6b64" stroke="#0a0a0a" stroke-width="1" stroke-linejoin="round"/>
<polygon points="479.2,306.7 490.8,308.4 529.3,428.6 517.6,427.6" fill="#59564f" stroke="#0a0a0a" stroke-width="1" stroke-linejoin="round"/>
<polygon points="517.6,427.6 529.3,428.6 508.6,532.2 494.5,533.2" fill="#45433f" stroke="#0a0a0a" stroke-width="1" stroke-linejoin="round"/>
<polygon points="514.2,432.0 517.6,427.6 494.5,533.2 489.5,530.5" fill="#5d5b55" stroke="#0a0a0a" stroke-width="1" stroke-linejoin="round"/>
<polygon points="457.4,420.3 470.8,419.3 496.9,508.8 489.5,530.5" fill="#5f5c56" stroke="#0a0a0a" stroke-width="1" stroke-linejoin="round"/>
<defs><linearGradient id="gB" gradientUnits="userSpaceOnUse" x1="425" y1="560" x2="490" y2="540"><stop offset="0" stop-color="#55524d"/><stop offset=".5" stop-color="#65625b"/><stop offset="1" stop-color="#57544f"/></linearGradient></defs>
<polygon points="413.4,425.3 450.1,418.6 457.4,420.3 489.5,530.5 494.8,534.8 493.1,560.5 511.9,627.3 515.4,627.3 513.7,647.0 481.1,648.7" fill="url(#gB)" stroke="#0a0a0a" stroke-width="1" stroke-linejoin="round"/>
<polyline points="450.1,418.6 493.1,560.5" fill="none" stroke="#0a0a0a" stroke-width="1" stroke-linejoin="round"/>
<polygon points="413.4,425.3 420.7,422.9 481.1,648.7 473.4,653.0" fill="#4f4c47" stroke="#0a0a0a" stroke-width="1" stroke-linejoin="round"/>
<polygon points="473.4,653.0 481.1,648.7 513.7,647.0 523.9,650.4 475.1,658.1" fill="#4a4742" stroke="#0a0a0a" stroke-width="1" stroke-linejoin="round"/>
<polygon points="494.8,534.8 505.9,531.4 530.8,620.4 515.4,627.3 499.1,555.4 493.1,560.5" fill="#5f5c56" stroke="#0a0a0a" stroke-width="1" stroke-linejoin="round"/>
<polygon points="493.1,560.5 499.1,555.4 515.4,617.0 511.9,627.3" fill="#3a3835" stroke="#0a0a0a" stroke-width="1" stroke-linejoin="round"/>
<polygon points="495.5,561.2 498.2,559.2 513.6,616.7 511.6,622.0" fill="#57544f"/>
<polygon points="515.4,627.3 530.8,620.4 529.1,640.1 523.9,650.4 513.7,647.0 511.9,627.3" fill="#45423e" stroke="#0a0a0a" stroke-width="1" stroke-linejoin="round"/>
<polygon points="567.0,437.0 607.1,430.3 610.4,447.0 573.7,453.7" fill="#000" opacity="0.14" filter="url(#b5)"/>
<polygon points="600.4,533.8 633.8,523.8 640.5,547.2 607.1,557.2" fill="#000" opacity="0.14" filter="url(#b6)"/>
<polygon points="582.3,314.7 590.8,316.3 626.6,417.4 618.7,415.5" fill="#1a1917" stroke="#0a0a0a" stroke-width="1" stroke-linejoin="round"/>
<polygon points="614.8,415.5 626.6,418.0 603.0,508.6 591.6,511.5" fill="#141312" stroke="#0a0a0a" stroke-width="1" stroke-linejoin="round"/>
<polygon points="572.5,307.8 578.4,309.2 585.7,352.1 569.1,408.8 548.3,404.8" fill="#1f1e1b" stroke="#0a0a0a" stroke-width="1" stroke-linejoin="round"/>
<polygon points="577.4,309.2 582.3,314.7 618.7,415.5 614.8,415.5 607.9,413.1 585.7,351.7" fill="#141312" stroke="#0a0a0a" stroke-width="1" stroke-linejoin="round"/>
<polygon points="548.3,404.8 569.1,408.8 592.2,473.1 590.2,491.9 584.3,513.5" fill="#262522" stroke="#0a0a0a" stroke-width="1" stroke-linejoin="round"/>
<polygon points="607.9,413.1 614.8,415.5 591.6,511.5 584.3,513.5 590.2,491.9 592.2,473.1" fill="#0f0f0e" stroke="#0a0a0a" stroke-width="1" stroke-linejoin="round"/>
<polygon points="650.5,437.0 677.2,433.6 680.6,447.0 655.5,450.3" fill="#000" opacity="0.12" filter="url(#b4)"/>
<polygon points="683.9,513.8 717.3,503.8 720.6,527.1 690.6,533.8" fill="#000" opacity="0.14" filter="url(#b6)"/>
<defs><linearGradient id="gD" gradientUnits="userSpaceOnUse" x1="650" y1="420" x2="700" y2="380"><stop offset="0" stop-color="#3b3a37"/><stop offset="1" stop-color="#4a4946"/></linearGradient></defs>
<polygon points="664.0,307.8 698.5,396.4 674.8,483.0 640.8,391.5" fill="url(#gD)" stroke="#0a0a0a" stroke-width="1" stroke-linejoin="round"/>
<polygon points="664.0,307.8 668.9,301.9 674.8,302.5 714.2,402.3 698.5,396.4" fill="#1c1b19" stroke="#0a0a0a" stroke-width="1" stroke-linejoin="round"/>
<polygon points="698.5,396.4 714.2,402.3 688.6,488.9 681.7,488.9 674.8,483.0" fill="#171614" stroke="#0a0a0a" stroke-width="1" stroke-linejoin="round"/>
<polygon points="701.8,405.6 704.6,406.4 686.9,468.2 684.7,467.4" fill="#3f3e3b"/>
<polyline points="684.7,467.4 686.9,468.2 685.3,487.5" fill="none" stroke="#0a0a0a" stroke-width="1" stroke-linejoin="round"/>
<polygon points="491.7,1069.1 558.0,1044.4 562.6,1056.8 497.9,1081.4" fill="#000" opacity="0.28" filter="url(#b5)"/>
<polygon points="436.2,956.6 451.7,950.4 456.3,964.3 440.9,968.9" fill="#000" opacity="0.2" filter="url(#b4)"/>
<polygon points="414.0,794.1 494.8,766.4 566.3,1033.6 477.9,1066.6 450.1,950.4 436.2,955.6 409.1,842.5 422.1,837.9" fill="#a09a8e" stroke="#0a0a0a" stroke-width="1" stroke-linejoin="round"/>
<polygon points="477.9,1066.6 566.3,1033.6 566.9,1037.0 479.4,1069.7" fill="#4a4843" stroke="#0a0a0a" stroke-width="1" stroke-linejoin="round"/>
<polygon points="436.2,955.6 450.1,950.4 451.0,953.8 437.2,958.7" fill="#4a4843" stroke="#0a0a0a" stroke-width="1" stroke-linejoin="round"/>
<polygon points="409.1,842.5 428.5,837.3 453.2,942.7 436.2,955.0" fill="#8a857a" stroke="#0a0a0a" stroke-width="1" stroke-linejoin="round"/>
<polygon points="415.9,840.4 427.6,837.9 449.2,928.8 436.9,933.5" fill="#a09a8e" stroke="#0a0a0a" stroke-width="1" stroke-linejoin="round"/>
<polygon points="436.9,933.5 449.2,928.8 453.2,942.7 436.2,955.0" fill="#7a7c78" stroke="#0a0a0a" stroke-width="1" stroke-linejoin="round"/>
<polyline points="419.3,839.7 440.9,931.9" fill="none" stroke="#0a0a0a" stroke-width="1" stroke-linejoin="round"/>
<polygon points="420.8,788.0 436.2,782.9 442.5,809.4 426.9,814.7" fill="#4a4843"/>
<polygon points="426.3,803.4 436.3,800.1 440.8,809.4 427.4,813.9" fill="#858681" stroke="#151515" stroke-width="0.6" stroke-linejoin="round"/>
<polygon points="432.8,785.2 435.8,784.5 440.8,809.4 436.3,800.1" fill="#55524c" stroke="#151515" stroke-width="0.6" stroke-linejoin="round"/>
<polygon points="422.9,788.4 432.8,785.2 436.3,800.1 426.3,803.4" fill="#a59f92" stroke="#151515" stroke-width="0.6" stroke-linejoin="round"/>
<polygon points="436.2,782.9 451.7,777.8 458.1,804.2 442.5,809.4" fill="#4a4843"/>
<polygon points="441.9,798.2 451.8,794.9 456.4,804.2 443.0,808.7" fill="#858681" stroke="#151515" stroke-width="0.6" stroke-linejoin="round"/>
<polygon points="448.2,780.1 451.2,779.4 456.4,804.2 451.8,794.9" fill="#55524c" stroke="#151515" stroke-width="0.6" stroke-linejoin="round"/>
<polygon points="438.3,783.3 448.2,780.1 451.8,794.9 441.9,798.2" fill="#a59f92" stroke="#151515" stroke-width="0.6" stroke-linejoin="round"/>
<polygon points="451.7,777.8 467.1,772.7 473.7,799.0 458.1,804.2" fill="#4a4843"/>
<polygon points="457.4,793.0 467.3,789.7 472.0,799.0 458.6,803.5" fill="#858681" stroke="#151515" stroke-width="0.6" stroke-linejoin="round"/>
<polygon points="463.6,775.0 466.6,774.3 472.0,799.0 467.3,789.7" fill="#55524c" stroke="#151515" stroke-width="0.6" stroke-linejoin="round"/>
<polygon points="453.8,778.2 463.6,775.0 467.3,789.7 457.4,793.0" fill="#a59f92" stroke="#151515" stroke-width="0.6" stroke-linejoin="round"/>
<polygon points="467.1,772.7 482.5,767.6 489.3,793.8 473.7,799.0" fill="#4a4843"/>
<polygon points="472.9,787.8 482.9,784.5 487.6,793.8 474.2,798.2" fill="#858681" stroke="#151515" stroke-width="0.6" stroke-linejoin="round"/>
<polygon points="479.1,769.9 482.1,769.2 487.6,793.8 482.9,784.5" fill="#55524c" stroke="#151515" stroke-width="0.6" stroke-linejoin="round"/>
<polygon points="469.2,773.1 479.1,769.9 482.9,784.5 472.9,787.8" fill="#a59f92" stroke="#151515" stroke-width="0.6" stroke-linejoin="round"/>
<polygon points="426.9,814.7 442.5,809.4 445.3,821.5 429.6,826.8" fill="#4a4843"/>
<polygon points="430.4,821.3 440.4,818.0 443.7,821.8 430.2,826.4" fill="#858681" stroke="#151515" stroke-width="0.6" stroke-linejoin="round"/>
<polygon points="438.9,811.2 441.9,810.3 443.7,821.8 440.4,818.0" fill="#55524c" stroke="#151515" stroke-width="0.6" stroke-linejoin="round"/>
<polygon points="428.9,814.5 438.9,811.2 440.4,818.0 430.4,821.3" fill="#a59f92" stroke="#151515" stroke-width="0.6" stroke-linejoin="round"/>
<polygon points="442.5,809.4 458.1,804.2 461.0,816.2 445.3,821.5" fill="#4a4843"/>
<polygon points="446.1,816.1 456.1,812.7 459.4,816.5 445.9,821.1" fill="#858681" stroke="#151515" stroke-width="0.6" stroke-linejoin="round"/>
<polygon points="454.5,805.9 457.5,805.1 459.4,816.5 456.1,812.7" fill="#55524c" stroke="#151515" stroke-width="0.6" stroke-linejoin="round"/>
<polygon points="444.5,809.3 454.5,805.9 456.1,812.7 446.1,816.1" fill="#a59f92" stroke="#151515" stroke-width="0.6" stroke-linejoin="round"/>
<polygon points="458.1,804.2 473.7,799.0 476.8,810.9 461.0,816.2" fill="#4a4843"/>
<polygon points="461.7,810.8 471.8,807.4 475.1,811.2 461.6,815.8" fill="#858681" stroke="#151515" stroke-width="0.6" stroke-linejoin="round"/>
<polygon points="470.1,800.7 473.1,799.8 475.1,811.2 471.8,807.4" fill="#55524c" stroke="#151515" stroke-width="0.6" stroke-linejoin="round"/>
<polygon points="460.1,804.1 470.1,800.7 471.8,807.4 461.7,810.8" fill="#a59f92" stroke="#151515" stroke-width="0.6" stroke-linejoin="round"/>
<polygon points="473.7,799.0 489.3,793.8 492.5,805.6 476.8,810.9" fill="#4a4843"/>
<polygon points="477.4,805.5 487.5,802.1 490.8,805.9 477.3,810.5" fill="#858681" stroke="#151515" stroke-width="0.6" stroke-linejoin="round"/>
<polygon points="485.7,795.5 488.7,794.6 490.8,805.9 487.5,802.1" fill="#55524c" stroke="#151515" stroke-width="0.6" stroke-linejoin="round"/>
<polygon points="475.7,798.8 485.7,795.5 487.5,802.1 477.4,805.5" fill="#a59f92" stroke="#151515" stroke-width="0.6" stroke-linejoin="round"/>
<polygon points="429.6,826.8 445.3,821.5 448.2,833.6 432.4,839.0" fill="#4a4843"/>
<polygon points="433.2,833.5 443.3,830.0 446.5,833.9 432.9,838.5" fill="#858681" stroke="#151515" stroke-width="0.6" stroke-linejoin="round"/>
<polygon points="441.7,823.3 444.7,822.4 446.5,833.9 443.3,830.0" fill="#55524c" stroke="#151515" stroke-width="0.6" stroke-linejoin="round"/>
<polygon points="431.6,826.7 441.7,823.3 443.3,830.0 433.2,833.5" fill="#a59f92" stroke="#151515" stroke-width="0.6" stroke-linejoin="round"/>
<polygon points="445.3,821.5 461.0,816.2 464.0,828.2 448.2,833.6" fill="#4a4843"/>
<polygon points="448.9,828.1 459.0,824.7 462.3,828.5 448.7,833.1" fill="#858681" stroke="#151515" stroke-width="0.6" stroke-linejoin="round"/>
<polygon points="457.4,818.0 460.4,817.1 462.3,828.5 459.0,824.7" fill="#55524c" stroke="#151515" stroke-width="0.6" stroke-linejoin="round"/>
<polygon points="447.3,821.4 457.4,818.0 459.0,824.7 448.9,828.1" fill="#a59f92" stroke="#151515" stroke-width="0.6" stroke-linejoin="round"/>
<polygon points="461.0,816.2 476.8,810.9 479.8,822.9 464.0,828.2" fill="#4a4843"/>
<polygon points="464.7,822.8 474.8,819.4 478.1,823.2 464.5,827.8" fill="#858681" stroke="#151515" stroke-width="0.6" stroke-linejoin="round"/>
<polygon points="473.1,812.7 476.1,811.8 478.1,823.2 474.8,819.4" fill="#55524c" stroke="#151515" stroke-width="0.6" stroke-linejoin="round"/>
<polygon points="463.0,816.1 473.1,812.7 474.8,819.4 464.7,822.8" fill="#a59f92" stroke="#151515" stroke-width="0.6" stroke-linejoin="round"/>
<polygon points="476.8,810.9 492.5,805.6 495.6,817.5 479.8,822.9" fill="#4a4843"/>
<polygon points="480.5,817.5 490.5,814.1 493.9,817.8 480.3,822.4" fill="#858681" stroke="#151515" stroke-width="0.6" stroke-linejoin="round"/>
<polygon points="488.8,807.4 491.8,806.5 493.9,817.8 490.5,814.1" fill="#55524c" stroke="#151515" stroke-width="0.6" stroke-linejoin="round"/>
<polygon points="478.8,810.8 488.8,807.4 490.5,814.1 480.5,817.5" fill="#a59f92" stroke="#151515" stroke-width="0.6" stroke-linejoin="round"/>
<polygon points="432.4,839.0 448.2,833.6 451.0,845.7 435.1,851.1" fill="#4a4843"/>
<polygon points="435.9,845.6 446.1,842.1 449.4,846.0 435.7,850.6" fill="#858681" stroke="#151515" stroke-width="0.6" stroke-linejoin="round"/>
<polygon points="444.5,835.4 447.5,834.5 449.4,846.0 446.1,842.1" fill="#55524c" stroke="#151515" stroke-width="0.6" stroke-linejoin="round"/>
<polygon points="434.4,838.8 444.5,835.4 446.1,842.1 435.9,845.6" fill="#a59f92" stroke="#151515" stroke-width="0.6" stroke-linejoin="round"/>
<polygon points="448.2,833.6 464.0,828.2 466.9,840.3 451.0,845.7" fill="#4a4843"/>
<polygon points="451.8,840.2 461.9,836.7 465.3,840.6 451.6,845.2" fill="#858681" stroke="#151515" stroke-width="0.6" stroke-linejoin="round"/>
<polygon points="460.3,830.0 463.3,829.1 465.3,840.6 461.9,836.7" fill="#55524c" stroke="#151515" stroke-width="0.6" stroke-linejoin="round"/>
<polygon points="450.2,833.4 460.3,830.0 461.9,836.7 451.8,840.2" fill="#a59f92" stroke="#151515" stroke-width="0.6" stroke-linejoin="round"/>
<polygon points="464.0,828.2 479.8,822.9 482.8,834.8 466.9,840.3" fill="#4a4843"/>
<polygon points="467.6,834.8 477.8,831.3 481.2,835.1 467.5,839.8" fill="#858681" stroke="#151515" stroke-width="0.6" stroke-linejoin="round"/>
<polygon points="476.1,824.6 479.1,823.7 481.2,835.1 477.8,831.3" fill="#55524c" stroke="#151515" stroke-width="0.6" stroke-linejoin="round"/>
<polygon points="466.0,828.1 476.1,824.6 477.8,831.3 467.6,834.8" fill="#a59f92" stroke="#151515" stroke-width="0.6" stroke-linejoin="round"/>
<polygon points="479.8,822.9 495.6,817.5 498.7,829.4 482.8,834.8" fill="#4a4843"/>
<polygon points="483.5,829.4 493.6,826.0 497.0,829.7 483.4,834.4" fill="#858681" stroke="#151515" stroke-width="0.6" stroke-linejoin="round"/>
<polygon points="491.9,819.3 494.9,818.4 497.0,829.7 493.6,826.0" fill="#55524c" stroke="#151515" stroke-width="0.6" stroke-linejoin="round"/>
<polygon points="481.8,822.7 491.9,819.3 493.6,826.0 483.5,829.4" fill="#a59f92" stroke="#151515" stroke-width="0.6" stroke-linejoin="round"/>
<polygon points="435.1,851.1 451.0,845.7 453.9,857.8 437.9,863.3" fill="#4a4843"/>
<polygon points="438.7,857.7 448.9,854.2 452.2,858.1 438.5,862.8" fill="#858681" stroke="#151515" stroke-width="0.6" stroke-linejoin="round"/>
<polygon points="447.3,847.5 450.4,846.6 452.2,858.1 448.9,854.2" fill="#55524c" stroke="#151515" stroke-width="0.6" stroke-linejoin="round"/>
<polygon points="437.1,850.9 447.3,847.5 448.9,854.2 438.7,857.7" fill="#a59f92" stroke="#151515" stroke-width="0.6" stroke-linejoin="round"/>
<polygon points="451.0,845.7 466.9,840.3 469.8,852.3 453.9,857.8" fill="#4a4843"/>
<polygon points="454.6,852.3 464.8,848.8 468.2,852.6 454.4,857.3" fill="#858681" stroke="#151515" stroke-width="0.6" stroke-linejoin="round"/>
<polygon points="463.2,842.0 466.3,841.1 468.2,852.6 464.8,848.8" fill="#55524c" stroke="#151515" stroke-width="0.6" stroke-linejoin="round"/>
<polygon points="453.0,845.5 463.2,842.0 464.8,848.8 454.6,852.3" fill="#a59f92" stroke="#151515" stroke-width="0.6" stroke-linejoin="round"/>
<polygon points="466.9,840.3 482.8,834.8 485.8,846.8 469.8,852.3" fill="#4a4843"/>
<polygon points="470.6,846.8 480.8,843.3 484.2,847.1 470.4,851.8" fill="#858681" stroke="#151515" stroke-width="0.6" stroke-linejoin="round"/>
<polygon points="479.1,836.6 482.2,835.7 484.2,847.1 480.8,843.3" fill="#55524c" stroke="#151515" stroke-width="0.6" stroke-linejoin="round"/>
<polygon points="468.9,840.1 479.1,836.6 480.8,843.3 470.6,846.8" fill="#a59f92" stroke="#151515" stroke-width="0.6" stroke-linejoin="round"/>
<polygon points="482.8,834.8 498.7,829.4 501.8,841.3 485.8,846.8" fill="#4a4843"/>
<polygon points="486.5,841.3 496.7,837.9 500.2,841.6 486.4,846.3" fill="#858681" stroke="#151515" stroke-width="0.6" stroke-linejoin="round"/>
<polygon points="495.0,831.2 498.1,830.3 500.2,841.6 496.7,837.9" fill="#55524c" stroke="#151515" stroke-width="0.6" stroke-linejoin="round"/>
<polygon points="484.8,834.7 495.0,831.2 496.7,837.9 486.5,841.3" fill="#a59f92" stroke="#151515" stroke-width="0.6" stroke-linejoin="round"/>
<polygon points="437.9,863.3 453.9,857.8 456.7,869.8 440.6,875.4" fill="#4a4843"/>
<polygon points="441.4,869.9 451.7,866.3 455.0,870.2 441.2,874.9" fill="#858681" stroke="#151515" stroke-width="0.6" stroke-linejoin="round"/>
<polygon points="450.1,859.6 453.2,858.6 455.0,870.2 451.7,866.3" fill="#55524c" stroke="#151515" stroke-width="0.6" stroke-linejoin="round"/>
<polygon points="439.9,863.1 450.1,859.6 451.7,866.3 441.4,869.9" fill="#a59f92" stroke="#151515" stroke-width="0.6" stroke-linejoin="round"/>
<polygon points="453.9,857.8 469.8,852.3 472.8,864.3 456.7,869.8" fill="#4a4843"/>
<polygon points="457.5,864.3 467.8,860.8 471.1,864.6 457.3,869.4" fill="#858681" stroke="#151515" stroke-width="0.6" stroke-linejoin="round"/>
<polygon points="466.1,854.1 469.2,853.1 471.1,864.6 467.8,860.8" fill="#55524c" stroke="#151515" stroke-width="0.6" stroke-linejoin="round"/>
<polygon points="455.9,857.6 466.1,854.1 467.8,860.8 457.5,864.3" fill="#a59f92" stroke="#151515" stroke-width="0.6" stroke-linejoin="round"/>
<polygon points="469.8,852.3 485.8,846.8 488.9,858.7 472.8,864.3" fill="#4a4843"/>
<polygon points="473.5,858.8 483.8,855.3 487.2,859.0 473.4,863.8" fill="#858681" stroke="#151515" stroke-width="0.6" stroke-linejoin="round"/>
<polygon points="482.1,848.6 485.2,847.7 487.2,859.0 483.8,855.3" fill="#55524c" stroke="#151515" stroke-width="0.6" stroke-linejoin="round"/>
<polygon points="471.9,852.1 482.1,848.6 483.8,855.3 473.5,858.8" fill="#a59f92" stroke="#151515" stroke-width="0.6" stroke-linejoin="round"/>
<polygon points="485.8,846.8 501.8,841.3 504.9,853.2 488.9,858.7" fill="#4a4843"/>
<polygon points="489.6,853.3 499.8,849.8 503.3,853.5 489.4,858.3" fill="#858681" stroke="#151515" stroke-width="0.6" stroke-linejoin="round"/>
<polygon points="498.1,843.1 501.2,842.2 503.3,853.5 499.8,849.8" fill="#55524c" stroke="#151515" stroke-width="0.6" stroke-linejoin="round"/>
<polygon points="487.9,846.6 498.1,843.1 499.8,849.8 489.6,853.3" fill="#a59f92" stroke="#151515" stroke-width="0.6" stroke-linejoin="round"/>
<polygon points="440.6,875.4 456.7,869.8 459.5,881.9 443.4,887.5" fill="#4a4843"/>
<polygon points="444.2,882.0 454.5,878.4 457.9,882.2 444.0,887.1" fill="#858681" stroke="#151515" stroke-width="0.6" stroke-linejoin="round"/>
<polygon points="452.9,871.7 456.0,870.7 457.9,882.2 454.5,878.4" fill="#55524c" stroke="#151515" stroke-width="0.6" stroke-linejoin="round"/>
<polygon points="442.7,875.2 452.9,871.7 454.5,878.4 444.2,882.0" fill="#a59f92" stroke="#151515" stroke-width="0.6" stroke-linejoin="round"/>
<polygon points="456.7,869.8 472.8,864.3 475.7,876.3 459.5,881.9" fill="#4a4843"/>
<polygon points="460.3,876.4 470.7,872.8 474.0,876.6 460.1,881.5" fill="#858681" stroke="#151515" stroke-width="0.6" stroke-linejoin="round"/>
<polygon points="469.0,866.1 472.1,865.2 474.0,876.6 470.7,872.8" fill="#55524c" stroke="#151515" stroke-width="0.6" stroke-linejoin="round"/>
<polygon points="458.7,869.7 469.0,866.1 470.7,872.8 460.3,876.4" fill="#a59f92" stroke="#151515" stroke-width="0.6" stroke-linejoin="round"/>
<polygon points="472.8,864.3 488.9,858.7 491.9,870.7 475.7,876.3" fill="#4a4843"/>
<polygon points="476.5,870.8 486.8,867.2 490.2,871.0 476.3,875.8" fill="#858681" stroke="#151515" stroke-width="0.6" stroke-linejoin="round"/>
<polygon points="485.1,860.5 488.2,859.6 490.2,871.0 486.8,867.2" fill="#55524c" stroke="#151515" stroke-width="0.6" stroke-linejoin="round"/>
<polygon points="474.8,864.1 485.1,860.5 486.8,867.2 476.5,870.8" fill="#a59f92" stroke="#151515" stroke-width="0.6" stroke-linejoin="round"/>
<polygon points="488.9,858.7 504.9,853.2 508.1,865.1 491.9,870.7" fill="#4a4843"/>
<polygon points="492.6,865.2 502.9,861.7 506.4,865.4 492.5,870.2" fill="#858681" stroke="#151515" stroke-width="0.6" stroke-linejoin="round"/>
<polygon points="501.2,855.0 504.3,854.1 506.4,865.4 502.9,861.7" fill="#55524c" stroke="#151515" stroke-width="0.6" stroke-linejoin="round"/>
<polygon points="490.9,858.5 501.2,855.0 502.9,861.7 492.6,865.2" fill="#a59f92" stroke="#151515" stroke-width="0.6" stroke-linejoin="round"/>
<polygon points="443.4,887.5 459.5,881.9 462.4,894.0 446.1,899.7" fill="#4a4843"/>
<polygon points="447.0,894.1 457.3,890.5 460.7,894.3 446.7,899.2" fill="#858681" stroke="#151515" stroke-width="0.6" stroke-linejoin="round"/>
<polygon points="455.8,883.8 458.9,882.8 460.7,894.3 457.3,890.5" fill="#55524c" stroke="#151515" stroke-width="0.6" stroke-linejoin="round"/>
<polygon points="445.4,887.4 455.8,883.8 457.3,890.5 447.0,894.1" fill="#a59f92" stroke="#151515" stroke-width="0.6" stroke-linejoin="round"/>
<polygon points="459.5,881.9 475.7,876.3 478.6,888.3 462.4,894.0" fill="#4a4843"/>
<polygon points="463.2,888.5 473.6,884.9 477.0,888.6 463.0,893.5" fill="#858681" stroke="#151515" stroke-width="0.6" stroke-linejoin="round"/>
<polygon points="471.9,878.1 475.0,877.2 477.0,888.6 473.6,884.9" fill="#55524c" stroke="#151515" stroke-width="0.6" stroke-linejoin="round"/>
<polygon points="461.6,881.7 471.9,878.1 473.6,884.9 463.2,888.5" fill="#a59f92" stroke="#151515" stroke-width="0.6" stroke-linejoin="round"/>
<polygon points="475.7,876.3 491.9,870.7 494.9,882.6 478.6,888.3" fill="#4a4843"/>
<polygon points="479.4,882.8 489.8,879.2 493.2,883.0 479.2,887.8" fill="#858681" stroke="#151515" stroke-width="0.6" stroke-linejoin="round"/>
<polygon points="488.1,872.5 491.2,871.6 493.2,883.0 489.8,879.2" fill="#55524c" stroke="#151515" stroke-width="0.6" stroke-linejoin="round"/>
<polygon points="477.8,876.1 488.1,872.5 489.8,879.2 479.4,882.8" fill="#a59f92" stroke="#151515" stroke-width="0.6" stroke-linejoin="round"/>
<polygon points="491.9,870.7 508.1,865.1 511.2,876.9 494.9,882.6" fill="#4a4843"/>
<polygon points="495.6,877.2 506.0,873.6 509.5,877.3 495.5,882.2" fill="#858681" stroke="#151515" stroke-width="0.6" stroke-linejoin="round"/>
<polygon points="504.3,866.9 507.4,865.9 509.5,877.3 506.0,873.6" fill="#55524c" stroke="#151515" stroke-width="0.6" stroke-linejoin="round"/>
<polygon points="493.9,870.5 504.3,866.9 506.0,873.6 495.6,877.2" fill="#a59f92" stroke="#151515" stroke-width="0.6" stroke-linejoin="round"/>
<polygon points="446.1,899.7 462.4,894.0 465.2,906.1 448.9,911.8" fill="#4a4843"/>
<polygon points="449.7,906.3 460.2,902.6 463.5,906.4 449.5,911.4" fill="#858681" stroke="#151515" stroke-width="0.6" stroke-linejoin="round"/>
<polygon points="458.6,895.8 461.7,894.9 463.5,906.4 460.2,902.6" fill="#55524c" stroke="#151515" stroke-width="0.6" stroke-linejoin="round"/>
<polygon points="448.2,899.5 458.6,895.8 460.2,902.6 449.7,906.3" fill="#a59f92" stroke="#151515" stroke-width="0.6" stroke-linejoin="round"/>
<polygon points="462.4,894.0 478.6,888.3 481.6,900.3 465.2,906.1" fill="#4a4843"/>
<polygon points="466.0,900.6 476.5,896.9 479.9,900.7 465.8,905.6" fill="#858681" stroke="#151515" stroke-width="0.6" stroke-linejoin="round"/>
<polygon points="474.9,890.2 478.0,889.2 479.9,900.7 476.5,896.9" fill="#55524c" stroke="#151515" stroke-width="0.6" stroke-linejoin="round"/>
<polygon points="464.4,893.8 474.9,890.2 476.5,896.9 466.0,900.6" fill="#a59f92" stroke="#151515" stroke-width="0.6" stroke-linejoin="round"/>
<polygon points="478.6,888.3 494.9,882.6 497.9,894.6 481.6,900.3" fill="#4a4843"/>
<polygon points="482.4,894.8 492.8,891.2 496.2,894.9 482.2,899.9" fill="#858681" stroke="#151515" stroke-width="0.6" stroke-linejoin="round"/>
<polygon points="491.1,884.5 494.3,883.5 496.2,894.9 492.8,891.2" fill="#55524c" stroke="#151515" stroke-width="0.6" stroke-linejoin="round"/>
<polygon points="480.7,888.1 491.1,884.5 492.8,891.2 482.4,894.8" fill="#a59f92" stroke="#151515" stroke-width="0.6" stroke-linejoin="round"/>
<polygon points="494.9,882.6 511.2,876.9 514.3,888.8 497.9,894.6" fill="#4a4843"/>
<polygon points="498.7,889.1 509.1,885.5 512.6,889.2 498.5,894.1" fill="#858681" stroke="#151515" stroke-width="0.6" stroke-linejoin="round"/>
<polygon points="507.4,878.8 510.5,877.8 512.6,889.2 509.1,885.5" fill="#55524c" stroke="#151515" stroke-width="0.6" stroke-linejoin="round"/>
<polygon points="497.0,882.4 507.4,878.8 509.1,885.5 498.7,889.1" fill="#a59f92" stroke="#151515" stroke-width="0.6" stroke-linejoin="round"/>
<polygon points="448.9,911.8 465.2,906.1 468.1,918.2 451.6,924.0" fill="#4a4843"/>
<polygon points="452.5,918.4 463.0,914.7 466.4,918.5 452.2,923.5" fill="#858681" stroke="#151515" stroke-width="0.6" stroke-linejoin="round"/>
<polygon points="461.4,907.9 464.5,907.0 466.4,918.5 463.0,914.7" fill="#55524c" stroke="#151515" stroke-width="0.6" stroke-linejoin="round"/>
<polygon points="450.9,911.6 461.4,907.9 463.0,914.7 452.5,918.4" fill="#a59f92" stroke="#151515" stroke-width="0.6" stroke-linejoin="round"/>
<polygon points="465.2,906.1 481.6,900.3 484.5,912.3 468.1,918.2" fill="#4a4843"/>
<polygon points="468.9,912.6 479.4,908.9 482.8,912.7 468.7,917.7" fill="#858681" stroke="#151515" stroke-width="0.6" stroke-linejoin="round"/>
<polygon points="477.8,902.2 480.9,901.2 482.8,912.7 479.4,908.9" fill="#55524c" stroke="#151515" stroke-width="0.6" stroke-linejoin="round"/>
<polygon points="467.3,905.9 477.8,902.2 479.4,908.9 468.9,912.6" fill="#a59f92" stroke="#151515" stroke-width="0.6" stroke-linejoin="round"/>
<polygon points="481.6,900.3 497.9,894.6 501.0,906.5 484.5,912.3" fill="#4a4843"/>
<polygon points="485.3,906.8 495.8,903.1 499.3,906.9 485.1,911.9" fill="#858681" stroke="#151515" stroke-width="0.6" stroke-linejoin="round"/>
<polygon points="494.1,896.4 497.3,895.5 499.3,906.9 495.8,903.1" fill="#55524c" stroke="#151515" stroke-width="0.6" stroke-linejoin="round"/>
<polygon points="483.7,900.1 494.1,896.4 495.8,903.1 485.3,906.8" fill="#a59f92" stroke="#151515" stroke-width="0.6" stroke-linejoin="round"/>
<polygon points="497.9,894.6 514.3,888.8 517.4,900.7 501.0,906.5" fill="#4a4843"/>
<polygon points="501.7,901.1 512.2,897.4 515.7,901.1 501.6,906.1" fill="#858681" stroke="#151515" stroke-width="0.6" stroke-linejoin="round"/>
<polygon points="510.5,890.7 513.6,889.7 515.7,901.1 512.2,897.4" fill="#55524c" stroke="#151515" stroke-width="0.6" stroke-linejoin="round"/>
<polygon points="500.0,894.4 510.5,890.7 512.2,897.4 501.7,901.1" fill="#a59f92" stroke="#151515" stroke-width="0.6" stroke-linejoin="round"/>
<polygon points="451.6,924.0 468.1,918.2 470.9,930.2 454.4,936.1" fill="#4a4843"/>
<polygon points="455.2,930.6 465.8,926.8 469.2,930.6 455.0,935.6" fill="#858681" stroke="#151515" stroke-width="0.6" stroke-linejoin="round"/>
<polygon points="464.2,920.0 467.4,919.1 469.2,930.6 465.8,926.8" fill="#55524c" stroke="#151515" stroke-width="0.6" stroke-linejoin="round"/>
<polygon points="453.7,923.8 464.2,920.0 465.8,926.8 455.2,930.6" fill="#a59f92" stroke="#151515" stroke-width="0.6" stroke-linejoin="round"/>
<polygon points="468.1,918.2 484.5,912.3 487.4,924.4 470.9,930.2" fill="#4a4843"/>
<polygon points="471.7,924.7 482.3,921.0 485.7,924.7 471.5,929.8" fill="#858681" stroke="#151515" stroke-width="0.6" stroke-linejoin="round"/>
<polygon points="480.7,914.2 483.8,913.2 485.7,924.7 482.3,921.0" fill="#55524c" stroke="#151515" stroke-width="0.6" stroke-linejoin="round"/>
<polygon points="470.1,917.9 480.7,914.2 482.3,921.0 471.7,924.7" fill="#a59f92" stroke="#151515" stroke-width="0.6" stroke-linejoin="round"/>
<polygon points="484.5,912.3 501.0,906.5 504.0,918.5 487.4,924.4" fill="#4a4843"/>
<polygon points="488.3,918.9 498.8,915.1 502.3,918.8 488.1,923.9" fill="#858681" stroke="#151515" stroke-width="0.6" stroke-linejoin="round"/>
<polygon points="497.1,908.4 500.3,907.4 502.3,918.8 498.8,915.1" fill="#55524c" stroke="#151515" stroke-width="0.6" stroke-linejoin="round"/>
<polygon points="486.6,912.1 497.1,908.4 498.8,915.1 488.3,918.9" fill="#a59f92" stroke="#151515" stroke-width="0.6" stroke-linejoin="round"/>
<polygon points="501.0,906.5 517.4,900.7 520.5,912.6 504.0,918.5" fill="#4a4843"/>
<polygon points="504.8,913.0 515.3,909.3 518.8,913.0 504.6,918.0" fill="#858681" stroke="#151515" stroke-width="0.6" stroke-linejoin="round"/>
<polygon points="513.6,902.6 516.8,901.6 518.8,913.0 515.3,909.3" fill="#55524c" stroke="#151515" stroke-width="0.6" stroke-linejoin="round"/>
<polygon points="503.1,906.3 513.6,902.6 515.3,909.3 504.8,913.0" fill="#a59f92" stroke="#151515" stroke-width="0.6" stroke-linejoin="round"/>
<polygon points="454.4,936.1 470.9,930.2 473.7,942.3 457.1,948.3" fill="#4a4843"/>
<polygon points="458.0,942.7 468.6,938.9 472.0,942.7 457.7,947.8" fill="#858681" stroke="#151515" stroke-width="0.6" stroke-linejoin="round"/>
<polygon points="467.0,932.1 470.2,931.1 472.0,942.7 468.6,938.9" fill="#55524c" stroke="#151515" stroke-width="0.6" stroke-linejoin="round"/>
<polygon points="456.5,935.9 467.0,932.1 468.6,938.9 458.0,942.7" fill="#a59f92" stroke="#151515" stroke-width="0.6" stroke-linejoin="round"/>
<polygon points="470.9,930.2 487.4,924.4 490.4,936.4 473.7,942.3" fill="#4a4843"/>
<polygon points="474.6,936.8 485.2,933.0 488.7,936.7 474.4,941.8" fill="#858681" stroke="#151515" stroke-width="0.6" stroke-linejoin="round"/>
<polygon points="483.6,926.3 486.8,925.3 488.7,936.7 485.2,933.0" fill="#55524c" stroke="#151515" stroke-width="0.6" stroke-linejoin="round"/>
<polygon points="473.0,930.0 483.6,926.3 485.2,933.0 474.6,936.8" fill="#a59f92" stroke="#151515" stroke-width="0.6" stroke-linejoin="round"/>
<polygon points="487.4,924.4 504.0,918.5 507.0,930.4 490.4,936.4" fill="#4a4843"/>
<polygon points="491.2,930.9 501.8,927.1 505.3,930.8 491.0,935.9" fill="#858681" stroke="#151515" stroke-width="0.6" stroke-linejoin="round"/>
<polygon points="500.1,920.4 503.3,919.4 505.3,930.8 501.8,927.1" fill="#55524c" stroke="#151515" stroke-width="0.6" stroke-linejoin="round"/>
<polygon points="489.6,924.1 500.1,920.4 501.8,927.1 491.2,930.9" fill="#a59f92" stroke="#151515" stroke-width="0.6" stroke-linejoin="round"/>
<polygon points="504.0,918.5 520.5,912.6 523.7,924.5 507.0,930.4" fill="#4a4843"/>
<polygon points="507.8,924.9 518.4,921.2 521.9,924.8 507.6,930.0" fill="#858681" stroke="#151515" stroke-width="0.6" stroke-linejoin="round"/>
<polygon points="516.7,914.5 519.9,913.5 521.9,924.8 518.4,921.2" fill="#55524c" stroke="#151515" stroke-width="0.6" stroke-linejoin="round"/>
<polygon points="506.1,918.3 516.7,914.5 518.4,921.2 507.8,924.9" fill="#a59f92" stroke="#151515" stroke-width="0.6" stroke-linejoin="round"/>
<polygon points="457.1,948.3 473.7,942.3 476.6,954.4 459.9,960.4" fill="#4a4843"/>
<polygon points="460.8,954.8 471.4,951.0 474.9,954.8 460.5,959.9" fill="#858681" stroke="#151515" stroke-width="0.6" stroke-linejoin="round"/>
<polygon points="469.9,944.2 473.1,943.2 474.9,954.8 471.4,951.0" fill="#55524c" stroke="#151515" stroke-width="0.6" stroke-linejoin="round"/>
<polygon points="459.2,948.0 469.9,944.2 471.4,951.0 460.8,954.8" fill="#a59f92" stroke="#151515" stroke-width="0.6" stroke-linejoin="round"/>
<polygon points="473.7,942.3 490.4,936.4 493.3,948.4 476.6,954.4" fill="#4a4843"/>
<polygon points="477.5,948.8 488.1,945.0 491.6,948.8 477.2,953.9" fill="#858681" stroke="#151515" stroke-width="0.6" stroke-linejoin="round"/>
<polygon points="486.5,938.3 489.7,937.3 491.6,948.8 488.1,945.0" fill="#55524c" stroke="#151515" stroke-width="0.6" stroke-linejoin="round"/>
<polygon points="475.9,942.1 486.5,938.3 488.1,945.0 477.5,948.8" fill="#a59f92" stroke="#151515" stroke-width="0.6" stroke-linejoin="round"/>
<polygon points="490.4,936.4 507.0,930.4 510.0,942.4 493.3,948.4" fill="#4a4843"/>
<polygon points="494.1,942.9 504.8,939.0 508.3,942.7 493.9,947.9" fill="#858681" stroke="#151515" stroke-width="0.6" stroke-linejoin="round"/>
<polygon points="503.1,932.3 506.3,931.3 508.3,942.7 504.8,939.0" fill="#55524c" stroke="#151515" stroke-width="0.6" stroke-linejoin="round"/>
<polygon points="492.5,936.1 503.1,932.3 504.8,939.0 494.1,942.9" fill="#a59f92" stroke="#151515" stroke-width="0.6" stroke-linejoin="round"/>
<polygon points="507.0,930.4 523.7,924.5 526.8,936.4 510.0,942.4" fill="#4a4843"/>
<polygon points="510.8,936.9 521.5,933.1 525.0,936.7 510.7,941.9" fill="#858681" stroke="#151515" stroke-width="0.6" stroke-linejoin="round"/>
<polygon points="519.8,926.4 523.0,925.4 525.0,936.7 521.5,933.1" fill="#55524c" stroke="#151515" stroke-width="0.6" stroke-linejoin="round"/>
<polygon points="509.1,930.2 519.8,926.4 521.5,933.1 510.8,936.9" fill="#a59f92" stroke="#151515" stroke-width="0.6" stroke-linejoin="round"/>
<polygon points="459.9,960.4 476.6,954.4 483.4,983.4 466.4,989.6" fill="#4a4843"/>
<polygon points="465.8,977.2 476.6,973.3 481.6,983.4 467.0,988.7" fill="#858681" stroke="#151515" stroke-width="0.6" stroke-linejoin="round"/>
<polygon points="472.8,957.0 476.1,956.1 481.6,983.4 476.6,973.3" fill="#55524c" stroke="#151515" stroke-width="0.6" stroke-linejoin="round"/>
<polygon points="462.1,960.9 472.8,957.0 476.6,973.3 465.8,977.2" fill="#a59f92" stroke="#151515" stroke-width="0.6" stroke-linejoin="round"/>
<polygon points="476.6,954.4 493.3,948.4 500.4,977.2 483.4,983.4" fill="#4a4843"/>
<polygon points="482.7,971.1 493.5,967.2 498.5,977.3 483.9,982.6" fill="#858681" stroke="#151515" stroke-width="0.6" stroke-linejoin="round"/>
<polygon points="489.6,951.0 492.8,950.1 498.5,977.3 493.5,967.2" fill="#55524c" stroke="#151515" stroke-width="0.6" stroke-linejoin="round"/>
<polygon points="478.9,954.8 489.6,951.0 493.5,967.2 482.7,971.1" fill="#a59f92" stroke="#151515" stroke-width="0.6" stroke-linejoin="round"/>
<polygon points="493.3,948.4 510.0,942.4 517.3,971.1 500.4,977.2" fill="#4a4843"/>
<polygon points="499.6,965.0 510.4,961.1 515.5,971.1 500.9,976.4" fill="#858681" stroke="#151515" stroke-width="0.6" stroke-linejoin="round"/>
<polygon points="506.3,945.0 509.6,944.1 515.5,971.1 510.4,961.1" fill="#55524c" stroke="#151515" stroke-width="0.6" stroke-linejoin="round"/>
<polygon points="495.6,948.8 506.3,945.0 510.4,961.1 499.6,965.0" fill="#a59f92" stroke="#151515" stroke-width="0.6" stroke-linejoin="round"/>
<polygon points="510.0,942.4 526.8,936.4 534.3,964.9 517.3,971.1" fill="#4a4843"/>
<polygon points="516.4,958.9 527.2,955.0 532.4,964.9 517.8,970.2" fill="#858681" stroke="#151515" stroke-width="0.6" stroke-linejoin="round"/>
<polygon points="523.1,939.0 526.3,938.1 532.4,964.9 527.2,955.0" fill="#55524c" stroke="#151515" stroke-width="0.6" stroke-linejoin="round"/>
<polygon points="512.3,942.8 523.1,939.0 527.2,955.0 516.4,958.9" fill="#a59f92" stroke="#151515" stroke-width="0.6" stroke-linejoin="round"/>
<polygon points="467.7,994.5 480.6,990.3 483.6,1002.5 470.5,1006.8" fill="#4a4843"/>
<polygon points="470.9,1001.4 479.3,998.7 482.3,1002.7 471.0,1006.4" fill="#858681" stroke="#151515" stroke-width="0.6" stroke-linejoin="round"/>
<polygon points="477.6,991.8 480.1,991.1 482.3,1002.7 479.3,998.7" fill="#55524c" stroke="#151515" stroke-width="0.6" stroke-linejoin="round"/>
<polygon points="469.3,994.5 477.6,991.8 479.3,998.7 470.9,1001.4" fill="#a59f92" stroke="#151515" stroke-width="0.6" stroke-linejoin="round"/>
<polygon points="480.6,990.3 493.6,986.1 496.8,998.2 483.6,1002.5" fill="#4a4843"/>
<polygon points="484.0,997.1 492.4,994.4 495.4,998.4 484.1,1002.1" fill="#858681" stroke="#151515" stroke-width="0.6" stroke-linejoin="round"/>
<polygon points="490.6,987.6 493.1,986.9 495.4,998.4 492.4,994.4" fill="#55524c" stroke="#151515" stroke-width="0.6" stroke-linejoin="round"/>
<polygon points="482.3,990.3 490.6,987.6 492.4,994.4 484.0,997.1" fill="#a59f92" stroke="#151515" stroke-width="0.6" stroke-linejoin="round"/>
<polygon points="493.6,986.1 506.5,981.9 509.9,993.9 496.8,998.2" fill="#4a4843"/>
<polygon points="497.1,992.9 505.4,990.2 508.5,994.1 497.2,997.8" fill="#858681" stroke="#151515" stroke-width="0.6" stroke-linejoin="round"/>
<polygon points="503.5,983.4 506.0,982.7 508.5,994.1 505.4,990.2" fill="#55524c" stroke="#151515" stroke-width="0.6" stroke-linejoin="round"/>
<polygon points="495.3,986.1 503.5,983.4 505.4,990.2 497.1,992.9" fill="#a59f92" stroke="#151515" stroke-width="0.6" stroke-linejoin="round"/>
<polygon points="506.5,981.9 519.5,977.7 523.0,989.7 509.9,993.9" fill="#4a4843"/>
<polygon points="510.1,988.6 518.5,985.9 521.6,989.8 510.3,993.5" fill="#858681" stroke="#151515" stroke-width="0.6" stroke-linejoin="round"/>
<polygon points="516.5,979.2 519.0,978.5 521.6,989.8 518.5,985.9" fill="#55524c" stroke="#151515" stroke-width="0.6" stroke-linejoin="round"/>
<polygon points="508.2,981.9 516.5,979.2 518.5,985.9 510.1,988.6" fill="#a59f92" stroke="#151515" stroke-width="0.6" stroke-linejoin="round"/>
<polygon points="519.5,977.7 532.4,973.5 536.1,985.4 523.0,989.7" fill="#4a4843"/>
<polygon points="523.2,984.4 531.5,981.6 534.7,985.6 523.5,989.2" fill="#858681" stroke="#151515" stroke-width="0.6" stroke-linejoin="round"/>
<polygon points="529.5,975.0 532.0,974.3 534.7,985.6 531.5,981.6" fill="#55524c" stroke="#151515" stroke-width="0.6" stroke-linejoin="round"/>
<polygon points="521.2,977.7 529.5,975.0 531.5,981.6 523.2,984.4" fill="#a59f92" stroke="#151515" stroke-width="0.6" stroke-linejoin="round"/>
<polygon points="470.5,1006.8 483.6,1002.5 486.6,1014.8 473.4,1019.1" fill="#4a4843"/>
<polygon points="473.8,1013.7 482.3,1010.9 485.3,1015.0 473.8,1018.7" fill="#858681" stroke="#151515" stroke-width="0.6" stroke-linejoin="round"/>
<polygon points="480.6,1004.0 483.1,1003.4 485.3,1015.0 482.3,1010.9" fill="#55524c" stroke="#151515" stroke-width="0.6" stroke-linejoin="round"/>
<polygon points="472.2,1006.8 480.6,1004.0 482.3,1010.9 473.8,1013.7" fill="#a59f92" stroke="#151515" stroke-width="0.6" stroke-linejoin="round"/>
<polygon points="483.6,1002.5 496.8,998.2 499.9,1010.4 486.6,1014.8" fill="#4a4843"/>
<polygon points="487.0,1009.3 495.5,1006.6 498.5,1010.6 487.1,1014.3" fill="#858681" stroke="#151515" stroke-width="0.6" stroke-linejoin="round"/>
<polygon points="493.7,999.8 496.3,999.1 498.5,1010.6 495.5,1006.6" fill="#55524c" stroke="#151515" stroke-width="0.6" stroke-linejoin="round"/>
<polygon points="485.3,1002.5 493.7,999.8 495.5,1006.6 487.0,1009.3" fill="#a59f92" stroke="#151515" stroke-width="0.6" stroke-linejoin="round"/>
<polygon points="496.8,998.2 509.9,993.9 513.2,1006.0 499.9,1010.4" fill="#4a4843"/>
<polygon points="500.3,1005.0 508.7,1002.2 511.8,1006.2 500.4,1010.0" fill="#858681" stroke="#151515" stroke-width="0.6" stroke-linejoin="round"/>
<polygon points="506.9,995.5 509.4,994.8 511.8,1006.2 508.7,1002.2" fill="#55524c" stroke="#151515" stroke-width="0.6" stroke-linejoin="round"/>
<polygon points="498.5,998.2 506.9,995.5 508.7,1002.2 500.3,1005.0" fill="#a59f92" stroke="#151515" stroke-width="0.6" stroke-linejoin="round"/>
<polygon points="509.9,993.9 523.0,989.7 526.5,1001.6 513.2,1006.0" fill="#4a4843"/>
<polygon points="513.5,1000.6 521.9,997.9 525.1,1001.8 513.7,1005.6" fill="#858681" stroke="#151515" stroke-width="0.6" stroke-linejoin="round"/>
<polygon points="520.0,991.2 522.5,990.5 525.1,1001.8 521.9,997.9" fill="#55524c" stroke="#151515" stroke-width="0.6" stroke-linejoin="round"/>
<polygon points="511.6,993.9 520.0,991.2 521.9,997.9 513.5,1000.6" fill="#a59f92" stroke="#151515" stroke-width="0.6" stroke-linejoin="round"/>
<polygon points="523.0,989.7 536.1,985.4 539.8,997.2 526.5,1001.6" fill="#4a4843"/>
<polygon points="526.7,996.3 535.2,993.5 538.4,997.4 527.0,1001.2" fill="#858681" stroke="#151515" stroke-width="0.6" stroke-linejoin="round"/>
<polygon points="533.1,986.9 535.6,986.2 538.4,997.4 535.2,993.5" fill="#55524c" stroke="#151515" stroke-width="0.6" stroke-linejoin="round"/>
<polygon points="524.7,989.6 533.1,986.9 535.2,993.5 526.7,996.3" fill="#a59f92" stroke="#151515" stroke-width="0.6" stroke-linejoin="round"/>
<polygon points="473.4,1019.1 486.6,1014.8 489.7,1027.0 476.2,1031.5" fill="#4a4843"/>
<polygon points="476.7,1026.0 485.2,1023.2 488.2,1027.2 476.7,1031.1" fill="#858681" stroke="#151515" stroke-width="0.6" stroke-linejoin="round"/>
<polygon points="483.6,1016.3 486.1,1015.6 488.2,1027.2 485.2,1023.2" fill="#55524c" stroke="#151515" stroke-width="0.6" stroke-linejoin="round"/>
<polygon points="475.1,1019.1 483.6,1016.3 485.2,1023.2 476.7,1026.0" fill="#a59f92" stroke="#151515" stroke-width="0.6" stroke-linejoin="round"/>
<polygon points="486.6,1014.8 499.9,1010.4 503.1,1022.5 489.7,1027.0" fill="#4a4843"/>
<polygon points="490.1,1021.6 498.6,1018.7 501.7,1022.7 490.1,1026.6" fill="#858681" stroke="#151515" stroke-width="0.6" stroke-linejoin="round"/>
<polygon points="496.9,1011.9 499.4,1011.2 501.7,1022.7 498.6,1018.7" fill="#55524c" stroke="#151515" stroke-width="0.6" stroke-linejoin="round"/>
<polygon points="488.4,1014.7 496.9,1011.9 498.6,1018.7 490.1,1021.6" fill="#a59f92" stroke="#151515" stroke-width="0.6" stroke-linejoin="round"/>
<polygon points="499.9,1010.4 513.2,1006.0 516.6,1018.0 503.1,1022.5" fill="#4a4843"/>
<polygon points="503.5,1017.1 512.0,1014.3 515.2,1018.2 503.6,1022.1" fill="#858681" stroke="#151515" stroke-width="0.6" stroke-linejoin="round"/>
<polygon points="510.2,1007.5 512.7,1006.8 515.2,1018.2 512.0,1014.3" fill="#55524c" stroke="#151515" stroke-width="0.6" stroke-linejoin="round"/>
<polygon points="501.7,1010.3 510.2,1007.5 512.0,1014.3 503.5,1017.1" fill="#a59f92" stroke="#151515" stroke-width="0.6" stroke-linejoin="round"/>
<polygon points="513.2,1006.0 526.5,1001.6 530.0,1013.5 516.6,1018.0" fill="#4a4843"/>
<polygon points="516.9,1012.7 525.4,1009.8 528.6,1013.7 517.1,1017.6" fill="#858681" stroke="#151515" stroke-width="0.6" stroke-linejoin="round"/>
<polygon points="523.5,1003.1 526.0,1002.4 528.6,1013.7 525.4,1009.8" fill="#55524c" stroke="#151515" stroke-width="0.6" stroke-linejoin="round"/>
<polygon points="515.0,1005.9 523.5,1003.1 525.4,1009.8 516.9,1012.7" fill="#a59f92" stroke="#151515" stroke-width="0.6" stroke-linejoin="round"/>
<polygon points="526.5,1001.6 539.8,997.2 543.5,1009.0 530.0,1013.5" fill="#4a4843"/>
<polygon points="530.2,1008.2 538.8,1005.4 542.1,1009.3 530.5,1013.1" fill="#858681" stroke="#151515" stroke-width="0.6" stroke-linejoin="round"/>
<polygon points="536.8,998.7 539.3,998.0 542.1,1009.3 538.8,1005.4" fill="#55524c" stroke="#151515" stroke-width="0.6" stroke-linejoin="round"/>
<polygon points="528.3,1001.5 536.8,998.7 538.8,1005.4 530.2,1008.2" fill="#a59f92" stroke="#151515" stroke-width="0.6" stroke-linejoin="round"/>
<polygon points="476.2,1031.5 489.7,1027.0 492.7,1039.2 479.0,1043.8" fill="#4a4843"/>
<polygon points="479.5,1038.3 488.2,1035.4 491.2,1039.4 479.5,1043.4" fill="#858681" stroke="#151515" stroke-width="0.6" stroke-linejoin="round"/>
<polygon points="486.5,1028.6 489.1,1027.8 491.2,1039.4 488.2,1035.4" fill="#55524c" stroke="#151515" stroke-width="0.6" stroke-linejoin="round"/>
<polygon points="477.9,1031.4 486.5,1028.6 488.2,1035.4 479.5,1038.3" fill="#a59f92" stroke="#151515" stroke-width="0.6" stroke-linejoin="round"/>
<polygon points="489.7,1027.0 503.1,1022.5 506.3,1034.6 492.7,1039.2" fill="#4a4843"/>
<polygon points="493.1,1033.8 501.8,1030.9 504.9,1034.9 493.1,1038.8" fill="#858681" stroke="#151515" stroke-width="0.6" stroke-linejoin="round"/>
<polygon points="500.0,1024.1 502.6,1023.3 504.9,1034.9 501.8,1030.9" fill="#55524c" stroke="#151515" stroke-width="0.6" stroke-linejoin="round"/>
<polygon points="491.4,1026.9 500.0,1024.1 501.8,1030.9 493.1,1033.8" fill="#a59f92" stroke="#151515" stroke-width="0.6" stroke-linejoin="round"/>
<polygon points="503.1,1022.5 516.6,1018.0 519.9,1030.0 506.3,1034.6" fill="#4a4843"/>
<polygon points="506.7,1029.2 515.3,1026.3 518.5,1030.3 506.8,1034.2" fill="#858681" stroke="#151515" stroke-width="0.6" stroke-linejoin="round"/>
<polygon points="513.5,1019.6 516.1,1018.8 518.5,1030.3 515.3,1026.3" fill="#55524c" stroke="#151515" stroke-width="0.6" stroke-linejoin="round"/>
<polygon points="504.9,1022.4 513.5,1019.6 515.3,1026.3 506.7,1029.2" fill="#a59f92" stroke="#151515" stroke-width="0.6" stroke-linejoin="round"/>
<polygon points="516.6,1018.0 530.0,1013.5 533.6,1025.5 519.9,1030.0" fill="#4a4843"/>
<polygon points="520.2,1024.7 528.9,1021.8 532.1,1025.7 520.4,1029.6" fill="#858681" stroke="#151515" stroke-width="0.6" stroke-linejoin="round"/>
<polygon points="527.0,1015.1 529.6,1014.3 532.1,1025.7 528.9,1021.8" fill="#55524c" stroke="#151515" stroke-width="0.6" stroke-linejoin="round"/>
<polygon points="518.3,1018.0 527.0,1015.1 528.9,1021.8 520.2,1024.7" fill="#a59f92" stroke="#151515" stroke-width="0.6" stroke-linejoin="round"/>
<polygon points="530.0,1013.5 543.5,1009.0 547.2,1020.9 533.6,1025.5" fill="#4a4843"/>
<polygon points="533.8,1020.1 542.5,1017.2 545.8,1021.1 534.1,1025.0" fill="#858681" stroke="#151515" stroke-width="0.6" stroke-linejoin="round"/>
<polygon points="540.4,1010.6 543.0,1009.9 545.8,1021.1 542.5,1017.2" fill="#55524c" stroke="#151515" stroke-width="0.6" stroke-linejoin="round"/>
<polygon points="531.8,1013.5 540.4,1010.6 542.5,1017.2 533.8,1020.1" fill="#a59f92" stroke="#151515" stroke-width="0.6" stroke-linejoin="round"/>
<polygon points="479.0,1043.8 492.7,1039.2 495.7,1051.5 481.9,1056.1" fill="#4a4843"/>
<polygon points="482.4,1050.7 491.2,1047.7 494.2,1051.7 482.4,1055.7" fill="#858681" stroke="#151515" stroke-width="0.6" stroke-linejoin="round"/>
<polygon points="489.5,1040.8 492.1,1040.1 494.2,1051.7 491.2,1047.7" fill="#55524c" stroke="#151515" stroke-width="0.6" stroke-linejoin="round"/>
<polygon points="480.8,1043.8 489.5,1040.8 491.2,1047.7 482.4,1050.7" fill="#a59f92" stroke="#151515" stroke-width="0.6" stroke-linejoin="round"/>
<polygon points="492.7,1039.2 506.3,1034.6 509.5,1046.8 495.7,1051.5" fill="#4a4843"/>
<polygon points="496.1,1046.0 504.9,1043.0 508.0,1047.0 496.2,1051.0" fill="#858681" stroke="#151515" stroke-width="0.6" stroke-linejoin="round"/>
<polygon points="503.2,1036.2 505.8,1035.5 508.0,1047.0 504.9,1043.0" fill="#55524c" stroke="#151515" stroke-width="0.6" stroke-linejoin="round"/>
<polygon points="494.4,1039.2 503.2,1036.2 504.9,1043.0 496.1,1046.0" fill="#a59f92" stroke="#151515" stroke-width="0.6" stroke-linejoin="round"/>
<polygon points="506.3,1034.6 519.9,1030.0 523.3,1042.1 509.5,1046.8" fill="#4a4843"/>
<polygon points="509.9,1041.4 518.7,1038.4 521.8,1042.3 510.0,1046.3" fill="#858681" stroke="#151515" stroke-width="0.6" stroke-linejoin="round"/>
<polygon points="516.8,1031.6 519.4,1030.9 521.8,1042.3 518.7,1038.4" fill="#55524c" stroke="#151515" stroke-width="0.6" stroke-linejoin="round"/>
<polygon points="508.1,1034.6 516.8,1031.6 518.7,1038.4 509.9,1041.4" fill="#a59f92" stroke="#151515" stroke-width="0.6" stroke-linejoin="round"/>
<polygon points="519.9,1030.0 533.6,1025.5 537.1,1037.4 523.3,1042.1" fill="#4a4843"/>
<polygon points="523.6,1036.7 532.4,1033.7 535.7,1037.6 523.8,1041.7" fill="#858681" stroke="#151515" stroke-width="0.6" stroke-linejoin="round"/>
<polygon points="530.4,1027.0 533.1,1026.3 535.7,1037.6 532.4,1033.7" fill="#55524c" stroke="#151515" stroke-width="0.6" stroke-linejoin="round"/>
<polygon points="521.7,1030.0 530.4,1027.0 532.4,1033.7 523.6,1036.7" fill="#a59f92" stroke="#151515" stroke-width="0.6" stroke-linejoin="round"/>
<polygon points="533.6,1025.5 547.2,1020.9 550.9,1032.7 537.1,1037.4" fill="#4a4843"/>
<polygon points="537.3,1032.1 546.1,1029.1 549.5,1032.9 537.6,1037.0" fill="#858681" stroke="#151515" stroke-width="0.6" stroke-linejoin="round"/>
<polygon points="544.1,1022.5 546.7,1021.7 549.5,1032.9 546.1,1029.1" fill="#55524c" stroke="#151515" stroke-width="0.6" stroke-linejoin="round"/>
<polygon points="535.4,1025.4 544.1,1022.5 546.1,1029.1 537.3,1032.1" fill="#a59f92" stroke="#151515" stroke-width="0.6" stroke-linejoin="round"/>
<polygon points="565.1,770.7 623.7,753.1 627.4,755.3 646.5,747.0 649.9,772.5 572.5,791.0" fill="#4a4843" stroke="#0a0a0a" stroke-width="1" stroke-linejoin="round"/>
<polygon points="555.8,767.6 621.2,744.8 625.8,752.2 645.2,743.9 646.5,747.0 627.4,755.3 623.7,753.1 565.1,770.7" fill="#8a857a" stroke="#0a0a0a" stroke-width="1" stroke-linejoin="round"/>
<polygon points="599.6,887.2 656.6,867.2 661.3,894.9 605.8,908.2" fill="#4a4843" stroke="#0a0a0a" stroke-width="1" stroke-linejoin="round"/>
<polygon points="594.1,882.6 655.1,862.6 656.6,867.2 599.6,887.2" fill="#8a857a" stroke="#0a0a0a" stroke-width="1" stroke-linejoin="round"/>
<polygon points="635.1,1015.1 699.8,995.7 702.9,998.2 722.9,989.6 726.6,1013.6 630.4,1039.8 627.4,1027.5" fill="#4a4843" stroke="#0a0a0a" stroke-width="1" stroke-linejoin="round"/>
<polygon points="632.0,1010.5 698.3,988.3 701.3,995.7 721.4,985.9 722.9,989.6 702.9,998.2 699.8,995.7 635.1,1015.1" fill="#8a857a" stroke="#0a0a0a" stroke-width="1" stroke-linejoin="round"/>
<polygon points="555.8,767.6 565.1,770.7 635.1,1015.1 627.4,1027.5" fill="#8a857a" stroke="#0a0a0a" stroke-width="1" stroke-linejoin="round"/>
<polygon points="555.8,767.6 557.4,779.3 630.4,1039.8 627.4,1027.5" fill="#5a5751" stroke="#0a0a0a" stroke-width="1" stroke-linejoin="round"/>
<polygon points="1441.1,241.5 1464.8,237.1 1567.2,371.8 1542.1,377.4" fill="#5d5a54" stroke="#0a0a0a" stroke-width="1" stroke-linejoin="round"/>
<polygon points="1441.1,241.5 1542.1,377.4 1535.1,410.9 1435.2,275.6" fill="#4a4843" stroke="#0a0a0a" stroke-width="1" stroke-linejoin="round"/>
<polygon points="1542.1,377.4 1567.2,371.8 1562.4,405.3 1535.1,410.9" fill="#3d3b38" stroke="#0a0a0a" stroke-width="1" stroke-linejoin="round"/>
<polygon points="1557.4,399.7 1561.0,394.4 1570.8,405.3 1569.1,417.9 1565.2,420.1 1555.5,408.1" fill="#3a3835" stroke="#0a0a0a" stroke-width="1" stroke-linejoin="round"/>
<polyline points="1561.0,394.4 1559.6,404.5 1569.1,417.9" fill="none" stroke="#0a0a0a" stroke-width="1" stroke-linejoin="round"/>
<circle cx="1561.3" cy="405.6" r="1" fill="#111"/>
<polygon points="1410.9,764.6 1429.1,760.4 1466.7,823.2 1445.8,831.6" fill="#000" opacity="0.22" filter="url(#b5)"/>
<polygon points="1409.5,711.6 1410.9,711.0 1456.4,782.8 1455.6,788.3" fill="#0f0f0e" stroke="#0a0a0a" stroke-width="1" stroke-linejoin="round"/>
<polygon points="1436.0,704.6 1444.4,707.4 1488.2,780.0 1482.1,775.2" fill="#191816" stroke="#0a0a0a" stroke-width="1" stroke-linejoin="round"/>
<polygon points="1456.4,782.8 1482.1,775.2 1488.2,780.0 1488.2,789.7 1472.3,795.3 1465.3,786.4 1455.6,788.3" fill="#141312" stroke="#0a0a0a" stroke-width="1" stroke-linejoin="round"/>
<polygon points="1410.9,711.0 1436.0,704.6 1482.1,775.2 1456.4,782.8" fill="#222120" stroke="#0a0a0a" stroke-width="1" stroke-linejoin="round"/>
<polyline points="1418.5,723.0 1443.7,716.4" fill="none" stroke="#000" stroke-width="1" stroke-linejoin="round"/>
<polyline points="1426.1,735.0 1451.4,728.2" fill="none" stroke="#000" stroke-width="1" stroke-linejoin="round"/>
<polyline points="1433.7,746.9 1459.1,739.9" fill="none" stroke="#000" stroke-width="1" stroke-linejoin="round"/>
<polyline points="1441.2,758.9 1466.7,751.7" fill="none" stroke="#000" stroke-width="1" stroke-linejoin="round"/>
<polyline points="1448.8,770.8 1474.4,763.5" fill="none" stroke="#000" stroke-width="1" stroke-linejoin="round"/>
<polyline points="1465.3,786.4 1470.9,784.7 1472.3,795.3" fill="none" stroke="#000" stroke-width="1" stroke-linejoin="round"/>
<polygon points="1500.2,742.3 1521.1,736.7 1546.2,778.6 1585.3,792.5 1582.5,806.5 1540.7,812.1" fill="#000" opacity="0.18" filter="url(#b6)"/>
<polygon points="1551.5,763.8 1609.8,744.4 1610.1,747.5 1598.9,752.9 1597.4,756.3 1561.6,765.4 1560.8,762.3" fill="#4a4843" stroke="#0a0a0a" stroke-width="1" stroke-linejoin="round"/>
<polygon points="1563.9,672.3 1567.0,672.3 1577.1,688.3 1579.8,691.5 1577.4,693.5 1567.8,676.7" fill="#55524d" stroke="#0a0a0a" stroke-width="1" stroke-linejoin="round"/>
<polygon points="1606.7,733.9 1609.5,733.6 1611.4,738.9 1609.0,739.7" fill="#3a3835" stroke="#0a0a0a" stroke-width="1" stroke-linejoin="round"/>
<polygon points="1609.0,738.9 1611.4,738.3 1621.5,752.9 1619.5,755.7 1616.3,755.3" fill="#9a9a94" stroke="#444" stroke-width="0.8" stroke-linejoin="round"/>
<path d="M1496.5,681.3 L1558.5,665.8 L1609.8,744.4 L1551.5,763.8ZM1542.1,701.9 L1556.9,698.5 L1589.6,733.5 L1567.0,740.8Z" fill="#7f7b73" fill-rule="evenodd" stroke="#0a0a0a" stroke-width="1" stroke-linejoin="round"/>
<path d="M1515.7,689.1 L1559.2,678.5 L1598.9,737.4 L1554.6,749.8ZM1542.1,701.9 L1556.9,698.5 L1589.6,733.5 L1567.0,740.8Z" fill="#5f5c56" fill-rule="evenodd" stroke="#0a0a0a" stroke-width="1" stroke-linejoin="round"/>
<path d="M1521.9,689.9 L1560.0,681.3 L1597.4,735.8 L1557.7,746.7ZM1542.1,701.9 L1556.9,698.5 L1589.6,733.5 L1567.0,740.8Z" fill="#75716a" fill-rule="evenodd" stroke="#0a0a0a" stroke-width="1" stroke-linejoin="round"/>
<polygon points="1517.2,689.9 1521.9,689.9 1558.5,746.7 1554.6,749.0" fill="#9a9d9c" stroke="#0a0a0a" stroke-width="1" stroke-linejoin="round"/>
<polygon points="1534.3,689.9 1554.6,684.5 1558.8,689.9 1556.9,698.5 1542.1,701.9 1536.7,695.3" fill="#3a3835" stroke="#0a0a0a" stroke-width="1" stroke-linejoin="round"/>
<polygon points="1536.7,692.5 1553.0,688.2 1555.3,692.5 1539.0,697.2" fill="#5d5a54"/>
<polygon points="1553.0,688.2 1555.3,686.0 1559.2,690.7 1557.2,698.5 1555.3,692.5" fill="#2d2b28"/>
<polygon points="1602.1,711.6 1627.2,717.2 1736.0,745.1 1741.6,764.6 1710.9,778.6 1641.1,786.9" fill="#000" opacity="0.2" filter="url(#b8)"/>
<polygon points="1598.1,661.9 1596.6,671.7 1653.1,755.3 1655.2,747.0" fill="#3a3835" stroke="#0a0a0a" stroke-width="1" stroke-linejoin="round"/>
<polygon points="1655.2,747.0 1767.7,721.0 1767.4,725.7 1653.1,755.3" fill="#55524d" stroke="#0a0a0a" stroke-width="1" stroke-linejoin="round"/>
<polygon points="1598.1,661.9 1610.6,658.5 1665.0,738.9 1655.2,747.0" fill="#6d6a63" stroke="#0a0a0a" stroke-width="1" stroke-linejoin="round"/>
<polygon points="1610.6,658.0 1668.2,641.7 1674.4,644.8 1678.3,651.0 1707.8,640.1 1767.7,720.6 1767.7,721.5 1655.2,747.0 1665.0,738.9" fill="#7d7971" stroke="#0a0a0a" stroke-width="1" stroke-linejoin="round"/>
<polyline points="1665.0,738.9 1729.3,725.7 1731.9,729.6 1767.7,721.0" fill="none" stroke="#0a0a0a" stroke-width="1" stroke-linejoin="round"/>
<polygon points="1620.7,661.1 1670.5,645.6 1671.7,654.9 1630.8,669.7" fill="#45433f" stroke="#0a0a0a" stroke-width="1" stroke-linejoin="round"/>
<polygon points="1630.8,669.7 1671.7,654.9 1672.4,660.3 1685.3,658.0 1692.3,666.6 1671.3,672.0 1668.9,668.9 1633.9,676.7" fill="#706c65" stroke="#0a0a0a" stroke-width="1" stroke-linejoin="round"/>
<polygon points="1610.6,658.0 1668.2,641.7 1670.5,645.6 1620.7,661.1" fill="#85817a" stroke="#0a0a0a" stroke-width="1" stroke-linejoin="round"/>
<polygon points="1668.2,641.7 1674.4,644.8 1680.6,653.3 1679.8,659.6 1672.4,660.8 1670.5,645.6" fill="#55524d" stroke="#0a0a0a" stroke-width="1" stroke-linejoin="round"/>
<polygon points="1671.7,644.8 1674.4,644.3 1680.6,653.3 1676.4,654.6" fill="#6d6a63"/>
<polygon points="1610.6,658.0 1620.7,661.1 1667.4,734.6 1665.0,738.9" fill="#85817a" stroke="#0a0a0a" stroke-width="1" stroke-linejoin="round"/>
<polyline points="1615.3,659.6 1666.1,736.7" fill="none" stroke="#0a0a0a" stroke-width="1" stroke-linejoin="round"/>
<polygon points="1665.0,738.9 1667.4,734.6 1725.3,721.8 1729.6,725.7" fill="#6d6a63" stroke="#0a0a0a" stroke-width="1" stroke-linejoin="round"/>
<polygon points="1661.9,725.2 1701.6,716.4 1703.5,718.4 1723.4,714.0 1725.3,721.8 1667.4,734.6" fill="#7d7971" stroke="#0a0a0a" stroke-width="1" stroke-linejoin="round"/>
<polygon points="1701.6,714.8 1722.6,709.7 1724.2,713.2 1703.5,717.9" fill="#2d2b28" stroke="#0a0a0a" stroke-width="1" stroke-linejoin="round"/>
<polygon points="1722.6,709.7 1728.1,716.4 1725.3,721.8 1723.4,714.0" fill="#6d6a63" stroke="#0a0a0a" stroke-width="1" stroke-linejoin="round"/>
<polygon points="1657.3,693.0 1665.0,691.0 1675.2,703.1 1666.6,706.2" fill="#726e67" stroke="#0a0a0a" stroke-width="1" stroke-linejoin="round"/>
<circle cx="1714.1" cy="658.3" r="1.5" fill="#222"/>
<circle cx="1748.0" cy="704.4" r="1.5" fill="#222"/>
<circle cx="1615.3" cy="677.9" r="1.5" fill="#222"/>
<circle cx="1647.6" cy="724.4" r="1.5" fill="#222"/>
<polygon points="1835.6,673.1 1846.2,666.4 1854.6,671.1 1859.3,680.9 1854.6,690.7 1846.2,694.9 1837.8,683.7" fill="#1a1917" stroke="#0a0a0a" stroke-width="1" stroke-linejoin="round"/>
<polygon points="1836.4,673.1 1846.2,667.0 1853.2,672.0 1843.4,678.7" fill="#262523"/>
<polygon points="1851.8,673.1 1855.4,672.0 1857.6,678.7 1853.7,680.4" fill="#0d0d0c"/>
<polygon points="1847.6,228.1 1895.0,217.0 1900.6,230.9 1853.2,244.9" fill="#000" opacity="0.18" filter="url(#b6)"/>
<polygon points="1834.2,175.7 1844.8,208.6 1849.0,240.7 1839.2,210.0" fill="#cfcfcf" stroke="#8a8a8a" stroke-width="0.8" stroke-linejoin="round" stroke-dasharray="3 2" fill-opacity=".75"/>
<polygon points="1844.8,208.6 1897.3,198.8 1893.6,229.5 1849.0,240.7" fill="#e2e2e2" stroke="#8a8a8a" stroke-width="0.8" stroke-linejoin="round" stroke-dasharray="3 2" fill-opacity=".75"/>
<polygon points="1834.2,175.7 1878.3,166.2 1897.3,198.8 1844.8,208.6" fill="#efefef" stroke="#8a8a8a" stroke-width="0.8" stroke-linejoin="round" stroke-dasharray="3 2" fill-opacity=".75"/>
<polyline points="1833.1,170.1 1838.4,208.6" fill="none" stroke="#5a5af0" stroke-width="1.6" stroke-linejoin="round"/>
<polyline points="1838.4,208.6 1851.8,249.9" fill="none" stroke="#f08080" stroke-width="1.4" stroke-linejoin="round"/>
<text x="1829.5" y="167.3" font-size="13" fill="#5a5af0" font-family="Liberation Sans,sans-serif">Z</text>
<text x="1849.0" y="259.4" font-size="13" fill="#f07070" font-family="Liberation Sans,sans-serif">X</text>
<text transform="matrix(1,-0.2,0.35,0.62,1853.2,194.6)" font-size="19" fill="#8c8c8c" font-family="Liberation Sans,Noto Sans CJK JP,sans-serif">上</text>
<text transform="matrix(1,-0.2,-0.05,0.7,1859.3,229.0)" font-size="19" fill="#8c8c8c" font-family="Liberation Sans,Noto Sans CJK JP,sans-serif">右</text></g></svg>
<div class="abs" style="left:0;top:0;width:8px;height:1168px;background:#fff"></div>
<div class="abs" style="left:0;top:0;width:8px;height:40px;background:#dfe3ea"></div>
<div class="abs" style="left:0;top:40px;width:8px;height:48px;background:#fff;border-radius:0 7px 0 0"></div>
<div class="abs" style="left:-12px;top:44px;width:14px;height:30px;background:#d3e3fd;border-radius:50%"></div>
<div class="abs" style="left:0;top:86px;width:8px;height:1px;background:#e0e0e0"></div>
<div class="abs" style="left:0;top:87px;width:8px;height:953px;background:#fff"></div>
<svg class="abs" style="left:0;top:90px" width="8" height="12"><path d="M0,3 L5,8 L0,8z" fill="#555"/></svg>
<div class="abs" style="left:0;top:105px;width:5px;height:351px;background:#5c5c5c;border-radius:0 3px 3px 0"></div>
<svg class="abs" style="left:0;top:1026px" width="8" height="12"><path d="M0,3 L5,3 L0,8z" fill="#555"/></svg>
<div class="abs" style="left:0;top:1040px;width:8px;height:128px;background:#000"></div>
<div class="abs" style="left:0;top:1040px;width:8px;height:40px;background:#151515"></div>
<div id="title" class="abs"></div>
<svg class="abs" style="left:10px;top:3px" width="17" height="17" viewBox="0 0 17 17"><path d="M2.5,1 h9.500 l3.500,3.500 v10 q0,1.500 -1.500,1.500 h-11.500 q-1.500,0 -1.500,-1.500 v-12 q0,-1.500 1.500,-1.500z" fill="#f8761f"/><path d="M1,11.500 h14.500 v3 q0,1.500 -1.500,1.500 h-11.500 q-1.500,0 -1.500,-1.500z" fill="#93390b"/><path d="M12,1 l3.500,3.500 h-3.500z" fill="#c4570f"/><text x="4.800" y="9.800" font-size="9" font-weight="bold" fill="#fff" font-family="Liberation Sans,sans-serif">F</text><text x="4.300" y="15" font-size="3.200" font-weight="bold" fill="#f6c9a8" font-family="Liberation Sans,sans-serif">FUS</text></svg>
<span class="t " style="transform:scaleX(0.984);left:31px;top:4px;font-size:12px;color:#000;">MZ-1200_open v1* (Team hub - g catsin) - Autodesk Fusion 個人用(商用利用不可)</span>
<svg class="abs" style="left:1790px;top:0" width="138" height="23"><path d="M17,10.5 h10" stroke="#000" stroke-width="1"/><rect x="62.5" y="7.5" width="7" height="7" fill="#fff" stroke="#000"/><path d="M64.5,7.5 v-2 h7 v7 h-2" fill="none" stroke="#000"/><path d="M108,5.5 l10,10 M118,5.5 l-10,10" stroke="#000" stroke-width="1.1"/></svg>
<div id="tabbar" class="abs"></div>
<div class="abs" style="left:8px;top:23px;width:1920px;height:2px;background:#c6c6c6"></div>
<div class="abs" style="left:201px;top:27px;width:40px;height:28px;background:#bdbdbd;border-radius:4px 4px 0 0"></div>
<div class="abs" style="left:244px;top:27px;width:1434px;height:28px;background:#f2f2f2;border-radius:5px 5px 0 0"></div>
<div class="abs" style="left:1682px;top:27px;width:28px;height:28px;background:#bdbdbd;border-radius:4px 4px 0 0"></div>
<svg class="abs" style="left:0;top:23px" width="1928" height="32" viewBox="0 23 1928 32"><rect x="17" y="32" width="4" height="4" rx=".6" fill="#606060"/><rect x="17" y="37" width="4" height="4" rx=".6" fill="#606060"/><rect x="17" y="42" width="4" height="4" rx=".6" fill="#606060"/><rect x="22" y="32" width="4" height="4" rx=".6" fill="#606060"/><rect x="22" y="37" width="4" height="4" rx=".6" fill="#606060"/><rect x="22" y="42" width="4" height="4" rx=".6" fill="#606060"/><rect x="27" y="32" width="4" height="4" rx=".6" fill="#606060"/><rect x="27" y="37" width="4" height="4" rx=".6" fill="#606060"/><rect x="27" y="42" width="4" height="4" rx=".6" fill="#606060"/><path d="M50,31.5 h8.5 l4.5,4.5 v10.5 h-13z" fill="#606060"/><path d="M58.5,31.5 v4.5 h4.5" fill="none" stroke="#cdcdcd" stroke-width="1"/><path d="M69.5,36.5 h7.0 l-3.5,4.0 z" fill="#606060"/><path d="M95,32 h11.5 l2.5,2.5 v12 h-14z" fill="#606060"/><rect x="98" y="33.5" width="7" height="4.5" fill="#cdcdcd"/><rect x="102.2" y="34" width="2" height="3.5" fill="#606060"/><rect x="98" y="41" width="8" height="5.5" fill="#cdcdcd"/><path d="M140.5,46.5 c0,-5.5 -3,-8 -10,-8 M134.5,34 l-5,4.5 l5,4.5" fill="none" stroke="#606060" stroke-width="1.8"/><path d="M148.0,36.5 h7.0 l-3.5,4.0 z" fill="#606060"/><path d="M169,46.5 c0,-5.5 3,-8 10,-8 M175,34 l5,4.5 l-5,4.5" fill="none" stroke="#9a9a9a" stroke-width="1.8"/><path d="M187.0,36.5 h7.0 l-3.5,4.0 z" fill="#9a9a9a"/><path d="M213,43.5 l9,-8 l9,8 h-2.5 v6.5 h-4.5 v-4.5 h-4 v4.5 h-4.5 v-6.5z" fill="#8e8e8e"/><rect x="226.5" y="35.5" width="2.2" height="4" fill="#8e8e8e"/><path d="M894,37.5 l7,-3.5 l7,3.5 v8 l-7,4 l-7,-4z" fill="#f28a2e"/><path d="M894,37.5 l7,3.5 l7,-3.5 l-7,-3.5z" fill="#f9b16a"/><path d="M901,41 v8.5 l7,-4 v-8z" fill="#d96a10"/><path d="M1662.5,37 l8,8 M1670.5,37 l-8,8" stroke="#555" stroke-width="1.2"/><path d="M1690,41.5 h12 M1696,35.5 v12" stroke="#777" stroke-width="2"/><circle cx="1729.8" cy="38.8" r="8.2" fill="#1b86e0"/><path d="M1729.8,32.5 l-4.5,6.5 h3 q.8,3 -1.2,6 q5,-2 4.2,-6 h3z" fill="#fff"/><circle cx="1763" cy="38.8" r="7" fill="none" stroke="#606060" stroke-width="2.2"/><path d="M1759.5,42.5 l3.5,-3.5 l-1,-2.5 l4.5,-1.5 l2.5,2 l-2,4 l-3,-.5 l-3,3.5z" fill="#606060"/><rect x="1755" y="30" width="5" height="5" fill="#cdcdcd"/><circle cx="1796" cy="38.8" r="7" fill="none" stroke="#606060" stroke-width="2.2"/><path d="M1796,34.5 v5 h4.5" fill="none" stroke="#606060" stroke-width="1.6"/><circle cx="1796" cy="38.8" r="4.6" fill="none" stroke="#606060" stroke-width=".8"/><path d="M1829,31.5 q5,0 5.5,6.5 q.3,3.5 2,5.5 h-15 q1.7,-2 2,-5.5 q.5,-6.500 5.500,-6.500z M1827,44.500 h4 q-2,3 -4,0z" fill="#606060"/><circle cx="1833.5" cy="33.5" r="3" fill="#1b9ae0"/><circle cx="1862" cy="38.8" r="8" fill="#606060"/><text x="1858.3" y="43.500" font-size="13" font-weight="bold" fill="#fff" font-family="Liberation Sans,sans-serif">?</text><defs><radialGradient id="av" cx=".5" cy=".3" r=".8"><stop offset="0" stop-color="#c9d3e0"/><stop offset="1" stop-color="#7e8da4"/></radialGradient><clipPath id="avc"><circle cx="1903" cy="39" r="12"/></clipPath></defs><circle cx="1903" cy="39" r="12" fill="url(#av)"/><g clip-path="url(#avc)"><ellipse cx="1903" cy="35.5" rx="5" ry="6.2" fill="#3d4b60"/><path d="M1891,53 q1,-9 8,-10 h8 q7,1 8,10z" fill="#3d4b60"/></g></svg>
<span class="t " style="transform:scaleX(1.009);left:914px;top:33.5px;font-size:12px;color:#333;">MZ-1200_open v1*</span>
<div id="toolbar" class="abs"></div>
<div class="abs" style="left:20px;top:65px;width:109px;height:61px;border:1px solid #d9d9d9;border-radius:5px;background:#f4f4f4"></div>
<span class="t " style="transform:scaleX(0.773);left:53px;top:88px;font-size:11px;color:#222;">デザイン</span>
<span class="t tab" style="transform:scaleX(0.727);left:158px;top:59px;color:#0696d7;">ソリッド</span>
<span class="t tab" style="transform:scaleX(0.718);left:236px;top:59px;">サーフェス</span>
<span class="t tab" style="transform:scaleX(0.705);left:319px;top:59px;">メッシュ</span>
<span class="t tab" style="transform:scaleX(0.733);left:397px;top:59px;">フォーム</span>
<span class="t tab" style="transform:scaleX(0.753);left:475px;top:59px;">シート メタル</span>
<span class="t tab" style="transform:scaleX(0.714);left:573px;top:59px;">プラスチック</span>
<span class="t tab" style="transform:scaleX(0.713);left:666px;top:59px;">ユーティリティ</span>
<span class="t tab" style="transform:scaleX(1.000);left:764px;top:59px;">管理</span>
<div class="abs" style="left:146px;top:75px;width:57px;height:3px;background:#0696d7;border-radius:1.5px"></div>
<div class="sep" style="left:358px"></div>
<div class="sep" style="left:628px"></div>
<div class="sep" style="left:768px"></div>
<div class="sep" style="left:892px"></div>
<div class="sep" style="left:951px"></div>
<div class="sep" style="left:1010px"></div>
<div class="sep" style="left:1107px"></div>
<span class="t lbl" style="transform:scaleX(1.000);left:230px;top:119px;">作成</span>
<span class="t lbl" style="transform:scaleX(1.000);left:476px;top:119px;">修正</span>
<span class="t lbl" style="transform:scaleX(0.753);left:672px;top:119px;">アセンブリ</span>
<span class="t lbl" style="transform:scaleX(0.725);left:782px;top:119px;">コンフィギュレーション</span>
<span class="t lbl" style="transform:scaleX(1.000);left:907px;top:119px;">構築</span>
<span class="t lbl" style="transform:scaleX(1.000);left:966px;top:119px;">検査</span>
<span class="t lbl" style="transform:scaleX(0.955);left:1042px;top:119px;">挿入</span>
<span class="t lbl" style="transform:scaleX(0.955);left:1122px;top:119px;">選択</span>
<svg class="abs" style="left:0;top:55px" width="1928" height="83" viewBox="0 55 1928 83"><path d="M92.85,94.7 h6.3 l-3.15,3.6 z" fill="#222"/><path d="M254.025,125.3 h5.95 l-2.975,3.4 z" fill="#333"/><path d="M501.025,125.3 h5.95 l-2.975,3.4 z" fill="#333"/><path d="M715.025,125.3 h5.95 l-2.975,3.4 z" fill="#333"/><path d="M871.025,125.3 h5.95 l-2.975,3.4 z" fill="#333"/><path d="M932.025,125.3 h5.95 l-2.975,3.4 z" fill="#333"/><path d="M990.025,125.3 h5.95 l-2.975,3.4 z" fill="#333"/><path d="M1066.025,125.3 h5.95 l-2.975,3.4 z" fill="#333"/><path d="M1145.025,125.3 h5.95 l-2.975,3.4 z" fill="#333"/>
<g fill="none" stroke="#444" stroke-width="1">
<path d="M147.500,84.500 h27 v18 M147.500,84.500 v27 h17" stroke-dasharray="5 2.500"/>
<path d="M154.500,90.500 h12 M154.500,90.500 v13" stroke-dasharray="4 2"/>
<path d="M167.500,90.500 q0,12 -13,13.500"/>
</g>
<g fill="#444"><rect x="146" y="83" width="3" height="3"/><rect x="173" y="83" width="3" height="3"/><rect x="146" y="110" width="3" height="3"/><rect x="153" y="89" width="3" height="3"/><rect x="165.500" y="89" width="3" height="3"/><rect x="153" y="102" width="3" height="3"/></g>
<path d="M164,106.500 h5 v-5 h4 v5 h5 v4 h-5 v5 h-4 v-5 h-5z" fill="#1ea83c"/>
<!-- extrude -->
<path d="M189,106 h18 l6,-4 v4 l-6,4.500 h-18z" fill="#c4c4c4"/><path d="M189,87 l6,-4.500 h18 l-6,4.500z" fill="#8fcaf6"/><path d="M189,87 h18 v19 h-18z" fill="#5fa8e6"/><path d="M207,87 l6,-4.500 v19.500 l-6,4z" fill="#3f86c9"/>
<path d="M216.500,108 v-24 M214.300,87.500 l2.200,-4.500 l2.200,4.500z" stroke="#222" fill="#222" stroke-width="1"/>
<!-- revolve -->
<path d="M231,97 q16,-14 32,0 v6 q-6,-4 -9,6 h-14 q-4,-10 -9,-6z" fill="#5fa8e6"/><path d="M231,97 q16,-14 32,0 q-6,-3 -9,6 h-14 q-3,-9 -9,-6z" fill="#8fcaf6"/><path d="M257.500,101 l5.500,-3.500 v8 l-5.500,4z" fill="#fff" stroke="#444" stroke-width="1"/>
<path d="M232.500,89.500 q14,-8 28,-1.500 M232,90 l5.500,-3 M232,90 l5,2.800" fill="none" stroke="#222" stroke-width="1"/>
<!-- hole -->
<path d="M274.500,88.500 l6,-5.500 h25 v24 l-6,6.500 h-25z" fill="#dcdcdc" stroke="#444" stroke-width="1"/><path d="M274.500,88.500 h25 v25 M299.500,88.500 l6,-5.500" fill="none" stroke="#444" stroke-width="1"/><circle cx="287" cy="101" r="8" fill="#f4f4f4" stroke="#444"/><circle cx="287" cy="101" r="5.800" fill="#5fa8e6" stroke="#444" stroke-width=".8"/><path d="M287,95.200 a5.800,5.800 0 0 1 5.800,5.800 a6,6 0 0 1 -5.800,-5.800z" fill="#f4f4f4"/>
<!-- pattern -->
<path d="M320,91 v18 M323,87.500 h18 M323,108.500 h18" stroke="#444" stroke-width="1"/><rect x="317.500" y="84.500" width="6" height="6" fill="#fff" stroke="#444"/><rect x="338" y="84" width="7" height="7" fill="#5fa8e6"/><rect x="317" y="105" width="7" height="7" fill="#5fa8e6"/><rect x="338" y="105" width="7" height="7" fill="#5fa8e6"/>
<!-- press pull -->
<path d="M372.500,88 l4,-5 h6 v30 h-10z" fill="#e4e4e4" stroke="#444"/><path d="M382,83 h8 l3,4 v22 l-3,4 h-8z" fill="#5fa8e6"/><path d="M390,83 l3,4 v22 l-3,4z" fill="#3f86c9"/><path d="M393,97.500 h7 M397.500,95 l3,2.500 l-3,2.500z" stroke="#222" fill="#222"/>
<!-- fillet -->
<path d="M415.500,92 q0,-8 9,-8.500 q20,0 20,21.500 l-5,8 h-24z" fill="#dcdcdc" stroke="#444"/><path d="M426,83.500 q19,0 18.500,21.500 h-8 q0,-14 -14,-15z" fill="#5fa8e6"/><path d="M415.500,113 h24 l5,-8" fill="none" stroke="#444"/>
<!-- shell -->
<path d="M458.500,89 l6,-6 h24 v24 l-6,6 h-24z" fill="#e4e4e4" stroke="#444"/><path d="M458.500,89 h24 v24 M482.500,89 l6,-6" fill="none" stroke="#444"/><path d="M464,95 h8 v7 h8 v7 h-16z" fill="#5fa8e6"/><path d="M464,95 h8 v7 h8" fill="none" stroke="#3f86c9" stroke-width="1.500"/>
<!-- combine -->
<path d="M511,92 l5,-6 h16 v15 l-5,6 h-16z" fill="#5fa8e6"/><path d="M527,92 l5,-6 v15 l-5,6z" fill="#3f86c9"/><path d="M511,92 l5,-6 h16 l-5,6z" fill="#8fcaf6"/>
<path d="M500,101 l5,-5 h13 v12 l-5,6 h-13z" fill="#5fa8e6"/><path d="M513,101 l5,-5 v12 l-5,6z" fill="#3f86c9"/><path d="M500,101 l5,-5 h13 l-5,5z" fill="#8fcaf6"/>
<!-- split -->
<path d="M545,89 l6,-6 h22 v9 l-6,5 h-22z" fill="#5fa8e6"/><path d="M545,89 l6,-6 h22 l-6,6z" fill="#8fcaf6"/><path d="M567,89 l6,-6 v9 l-6,5z" fill="#3f86c9"/>
<path d="M545,102 h22 l6,-5 v9 l-6,6 h-22z" fill="#d0d0d0"/><path d="M567,102 l6,-5 v9 l-6,6z" fill="#b4b4b4"/>
<path d="M543.500,99.500 h24 l7,-6" fill="none" stroke="#3f86c9" stroke-width="1.300"/>
<!-- move -->
<path d="M602,84 v27 M588.500,97.500 h27" stroke="#222" stroke-width="1.600"/><path d="M602,82 l4,5.500 h-8z M602,113 l4,-5.500 h-8z M587,97.500 l5.500,-4 v8z M617,97.500 l-5.500,-4 v8z" fill="#222"/>
<!-- new component -->
<path d="M640,90 l4,-3.500 h10 l-4,3.500z" fill="#8fcaf6"/><rect x="640" y="90" width="10" height="10" fill="#5fa8e6"/><path d="M650,90 l4,-3.500 v10 l-4,3.500z" fill="#3f86c9"/>
<rect x="640" y="101" width="13" height="11" fill="#dcdcdc"/><path d="M653,101 l4,-3 v11 l-4,3z" fill="#bcbcbc"/><rect x="654" y="101" width="12" height="11" fill="#e4e4e4"/><path d="M654,101 l3,-3 h12 l-3,3z" fill="#f0f0f0"/><path d="M666,101 l3,-3 v11 l-3,3z" fill="#c4c4c4"/>
<path d="M663.500,83.500 l1.500,4 l4,-2.500 l-1.500,4 l4,1.500 l-4,1.500 l1.500,4 l-4,-2.500 l-1.500,4 l-1.500,-4 l-4,2.500 l1.500,-4 l-4,-1.500 l4,-1.500 l-1.500,-4 l4,2.500z" fill="#f39a1e"/>
<!-- joint -->
<path d="M685.500,108 v-18 q0,-5 5,-5.500 q5,0 5,5.500 v11 l-6,9z" fill="#c4c4c4" stroke="#444"/><path d="M701.500,92 l6,-7 l6,5 v22 l-12,-8z" fill="#d4d4d4" stroke="#444"/><path d="M698.500,86 v14" stroke="#3f86c9" stroke-width="1.400"/><path d="M702,94 h-5 M698.500,91.500 l-3,2.500 l3,2.500" fill="none" stroke="#3f86c9" stroke-width="1"/>
<!-- table -->
<rect x="726" y="83" width="6" height="6" fill="#5fa8e6"/><rect x="733" y="90" width="6" height="6" fill="#fff" stroke="#666"/><path d="M734,97 v14 M734,101 h6 M734,106 h6 M734,111 h6" stroke="#666" fill="none"/><rect x="742" y="91" width="16" height="22" fill="#fff" stroke="#444"/><rect x="742" y="91" width="16" height="3.500" fill="#444"/><path d="M742,98.500 h16 M742,103 h16 M742,107.500 h16 M749,94 v19" stroke="#777" stroke-width=".8"/>
<!-- config (disabled) -->
<g opacity=".45"><path d="M793,93 l8,-7 h22 v20 l-8,5 h-22z" fill="#e6e6e6" stroke="#ccc"/><circle cx="818" cy="90" r="7.500" fill="#a8d0f4"/><path d="M818,85 l-3.500,5 h2.500 v4 h2 v-4 h2.500z" fill="#fff"/><path d="M812,103 h12 M812,109 h12 M816,101 v4 M820,107 v4" stroke="#bbb" stroke-width="1.300"/>
<rect x="837" y="84" width="28" height="26" fill="#ececec" stroke="#ccc"/><path d="M837,89 h28 M837,96 h28 M837,103 h28 M846,89 v21 M855,89 v21" stroke="#ccc"/><circle cx="861" cy="90" r="7.500" fill="#a8d0f4"/><path d="M861,85 l-3.500,5 h2.500 v4 h2 v-4 h2.500z" fill="#fff"/><path d="M855,103 h12 M855,109 h12 M859,101 v4 M863,107 v4" stroke="#bbb" stroke-width="1.300"/></g>
<!-- construct -->
<path d="M908.500,90 l6,-7 v22 l-6,7z" fill="#e0e0e0" stroke="#444"/><path d="M914.500,83 h3 v23 l-3,5z" fill="#c8c8c8" stroke="#444" stroke-width=".8"/><path d="M917,90 l8,-7 v22 l-8,7z" fill="#4cc07a"/><path d="M928,92 l9,-8 v20 l-9,8z" fill="#e8935a"/>
<!-- inspect -->
<path d="M967.500,89 v10 M995.500,89 v10 M968,94 h27" stroke="#444"/><path d="M968,94 l4,-2.200 v4.400z M995,94 l-4,-2.200 v4.400z" fill="#444"/><rect x="967" y="100" width="29" height="6" fill="#f0a818"/><path d="M970,100 v3 M973,100 v2 M976,100 v3 M979,100 v2 M982,100 v3 M985,100 v2 M988,100 v3 M991,100 v2 M994,100 v3" stroke="#a86a00" stroke-width=".7"/>
<!-- insert derive -->
<path d="M1026.500,93 l6,-6 h19 v19 l-6,6 h-19z" fill="#e2e2e2" stroke="#444"/><path d="M1026.500,93 h19 v19 M1045.500,93 l6,-6" fill="none" stroke="#444"/><path d="M1022,86 h9 v-3.500 l7,5.500 l-7,5.500 v-3.500 h-9z" fill="#1b86e0"/>
<g fill="none" stroke="#222" stroke-width="2"><rect x="1037" y="105.500" width="9" height="6" rx="3" transform="rotate(-30 1041.500 108.500)"/><rect x="1044" y="101.500" width="9" height="6" rx="3" transform="rotate(-30 1048.500 104.500)"/></g>
<!-- insert image -->
<rect x="1066" y="83.500" width="29.500" height="28.500" fill="#4f9ede"/><path d="M1066,104 l8,-8 l6,6 l4,-4 l11.500,10 v4 h-29.500z" fill="#2f7fc4"/><circle cx="1087" cy="91" r="3.200" fill="#ffef9e"/>
<!-- select -->
<rect x="1118" y="79" width="38" height="38" fill="#1192d9"/><rect x="1122.500" y="83.500" width="26" height="21" fill="none" stroke="#a8f08c" stroke-width="1.200" stroke-dasharray="4 2.500"/><path d="M1141,96 l11,9 h-5 l3,6 l-3,1.500 l-3,-6 l-3,3.500z" fill="#fff"/>
</svg>
<div class="abs" style="left:12px;top:144px;width:299px;height:24px;background:#f3f3f3;border:1px solid #cfcfcf"></div>
<span class="t bt" style="transform:scaleX(0.750);left:37px;top:148px;color:#555;">ブラウザ</span>
<div class="abs" style="left:12px;top:1131px;width:299px;height:25px;background:#f3f3f3;border:1px solid #cfcfcf;border-top-color:#f3f3f3"></div>
<span class="t bt" style="transform:scaleX(0.727);left:37px;top:1135.5px;color:#555;">コメント</span>
<div class="rowbg" style="left:48px;top:174px;width:188px"></div>
<div class="abs" style="left:73px;top:176px;width:138px;height:16px;background:#8a8a8a"></div>
<span class="t bt" style="transform:scaleX(1.014);left:106px;top:176px;color:#fff;font-weight:bold;">MZ-1200_open v1</span>
<div class="rowbg" style="left:66px;top:198px;width:118px"></div>
<span class="t bt" style="transform:scaleX(0.798);left:94px;top:200.5px;">ドキュメントの設定</span>
<div class="rowbg" style="left:66px;top:222px;width:126px"></div>
<span class="t bt" style="transform:scaleX(0.828);left:99px;top:224.5px;">名前の付いたビュー</span>
<div class="rowbg" style="left:66px;top:246px;width:91px"></div>
<span class="t bt" style="transform:scaleX(1.000);left:124px;top:248.5px;">原点</span>
<div class="rowbg" style="left:66px;top:270px;width:95px"></div>
<span class="t bt" style="transform:scaleX(0.776);left:124px;top:272.5px;">ボディ</span>
<div class="rowbg" style="left:84px;top:294px;width:123px"></div>
<span class="t bt" style="transform:scaleX(0.849);left:142px;top:296.5px;">グループ2 (4)</span>
<div class="rowbg" style="left:84px;top:318px;width:107px"></div>
<span class="t bt" style="transform:scaleX(0.788);left:142px;top:320.5px;">グループ3</span>
<div class="rowbg" style="left:84px;top:342px;width:139px"></div>
<span class="t bt" style="transform:scaleX(0.802);left:142px;top:344.5px;">ボディ・上面・前</span>
<div class="rowbg" style="left:84px;top:366px;width:156px"></div>
<span class="t bt" style="transform:scaleX(0.886);left:142px;top:368.5px;">ボディ・上面 (1) (1)</span>
<div class="rowbg" style="left:84px;top:390px;width:122px"></div>
<span class="t bt" style="transform:scaleX(0.812);left:142px;top:392.5px;">ボディ・底面</span>
<div class="rowbg" style="left:84px;top:414px;width:139px"></div>
<span class="t bt" style="transform:scaleX(0.856);left:142px;top:416.5px;">ボディ・底面 (1)</span>
<div class="rowbg" style="left:84px;top:438px;width:108px"></div>
<span class="t bt" style="transform:scaleX(0.709);left:142px;top:440.5px;">キーボード</span>
<div class="rowbg" style="left:84px;top:462px;width:132px"></div>
<span class="t bt" style="transform:scaleX(0.716);left:142px;top:464.5px;">カセット・ボタン</span>
<div class="rowbg" style="left:84px;top:486px;width:117px"></div>
<span class="t bt" style="transform:scaleX(0.736);left:142px;top:488.5px;">ディスプレイ</span>
<div class="rowbg" style="left:84px;top:510px;width:118px"></div>
<span class="t bt" style="transform:scaleX(0.742);left:142px;top:512.5px;">カセット・蓋</span>
<div class="rowbg" style="left:84px;top:534px;width:139px"></div>
<span class="t bt" style="transform:scaleX(0.707);left:142px;top:536.5px;">カセット・カウンタ</span>
<div class="rowbg" style="left:84px;top:558px;width:118px"></div>
<span class="t bt" style="transform:scaleX(0.881);left:142px;top:560.5px;">拡張IO・蓋</span>
<div class="rowbg" style="left:84px;top:582px;width:162px"></div>
<span class="t bt" style="transform:scaleX(0.845);left:142px;top:584.5px;">フロントパネル (1) (1)</span>
<div class="rowbg" style="left:84px;top:606px;width:179px"></div>
<span class="t bt" style="transform:scaleX(0.870);left:142px;top:608.5px;">フロントパネル (1) (1) (1)</span>
<div class="rowbg" style="left:84px;top:630px;width:190px"></div>
<span class="t bt" style="transform:scaleX(0.922);left:142px;top:632.5px;">ボディ・上面 (1) (1) (2) (1)</span>
<div class="rowbg" style="left:84px;top:654px;width:189px"></div>
<span class="t bt" style="transform:scaleX(0.760);left:142px;top:656.5px;">ボディ・ディスプレイカバー (1)</span>
<div class="rowbg" style="left:84px;top:678px;width:189px"></div>
<span class="t bt" style="transform:scaleX(0.760);left:142px;top:680.5px;">ボディ・ディスプレイカバー (2)</span>
<div class="rowbg" style="left:84px;top:702px;width:206px"></div>
<span class="t bt" style="transform:scaleX(0.785);left:142px;top:704.5px;">ボディ・ディスプレイカバー (2) (1)</span>
<div class="rowbg" style="left:84px;top:726px;width:223px"></div>
<span class="t bt" style="transform:scaleX(0.806);left:142px;top:728.5px;">ボディ・ディスプレイカバー (2) (1) (1)</span>
<div class="rowbg" style="left:84px;top:750px;width:206px"></div>
<span class="t bt" style="transform:scaleX(0.785);left:142px;top:752.5px;">ボディ・ディスプレイカバー (1) (1)</span>
<div class="rowbg" style="left:84px;top:774px;width:123px"></div>
<span class="t bt" style="transform:scaleX(0.822);left:142px;top:776.5px;">内部フレーム</span>
<div class="rowbg" style="left:84px;top:798px;width:168px"></div>
<span class="t bt" style="transform:scaleX(0.863);left:142px;top:800.5px;">ディスプレイ (1) (1) (1)</span>
<div class="rowbg" style="left:84px;top:822px;width:151px"></div>
<span class="t bt" style="transform:scaleX(0.835);left:142px;top:824.5px;">ディスプレイ (1) (1)</span>
<div class="rowbg" style="left:66px;top:846px;width:111px"></div>
<span class="t bt" style="transform:scaleX(0.764);left:124px;top:848.5px;">キャンバス</span>
<div class="rowbg" style="left:66px;top:870px;width:139px"></div>
<span class="t bt" style="transform:scaleX(0.729);left:124px;top:872.5px;">コンストラクション</span>
<div class="rowbg" style="left:66px;top:894px;width:86px"></div>
<span class="t bt" style="transform:scaleX(0.858);left:99px;top:896.5px;">押し出し1</span>
<div class="rowbg" style="left:66px;top:918px;width:92px"></div>
<span class="t bt" style="transform:scaleX(0.889);left:99px;top:920.5px;">押し出し39</span>
<div class="rowbg" style="left:66px;top:942px;width:92px"></div>
<span class="t bt" style="transform:scaleX(0.889);left:99px;top:944.5px;">押し出し49</span>
<div class="rowbg" style="left:66px;top:966px;width:92px"></div>
<span class="t bt" style="transform:scaleX(0.889);left:99px;top:968.5px;">押し出し69</span>
<div class="rowbg" style="left:66px;top:990px;width:92px"></div>
<span class="t bt" style="transform:scaleX(0.889);left:99px;top:992.5px;">押し出し70</span>
<div class="rowbg" style="left:66px;top:1014px;width:92px"></div>
<span class="t bt" style="transform:scaleX(0.889);left:99px;top:1016.5px;">押し出し72</span>
<div class="rowbg" style="left:66px;top:1038px;width:77px"></div>
<span class="t bt" style="transform:scaleX(0.993);left:99px;top:1040.5px;">勾配75</span>
<div class="rowbg" style="left:66px;top:1062px;width:77px"></div>
<span class="t bt" style="transform:scaleX(0.993);left:99px;top:1064.5px;">勾配76</span>
<div class="rowbg" style="left:66px;top:1086px;width:77px"></div>
<span class="t bt" style="transform:scaleX(0.993);left:99px;top:1088.5px;">勾配77</span>
<svg class="abs" style="left:0;top:138px" width="330" height="1030" viewBox="0 138 330 1030"><path d="M17.500,156 l4.500,-3 v6z M22.500,156 l4.500,-3 v6z" fill="#222"/><circle cx="295" cy="156" r="4.500" fill="#222"/><rect x="292.500" y="155.300" width="5" height="1.400" fill="#fff"/><rect x="16.500" y="174" width="5.500" height="934" fill="#c3c5c8" opacity=".95"/><rect x="16.500" y="174" width="5.500" height="72" rx="2.500" fill="#9c9c9c"/><circle cx="295" cy="1143.500" r="4.500" fill="#222"/><path d="M292.500,1143.500 h5 M295,1141 v5" stroke="#fff" stroke-width="1.300"/><path d="M40,178 v11.500 h-11.500z" fill="#777" stroke="#222" stroke-width="1"/><path d="M52,184 q8,-8.500 16,0 q-8,8.500 -16,0z" fill="#9a9a9a"/><circle cx="60" cy="184" r="3.400" fill="#f0f0f0"/><circle cx="60" cy="184" r="2" fill="#9a9a9a"/><path d="M77.500,180.5 l3,-3.500 h10.500 v10.500 l-3,3.500 h-10.500z" fill="#eef0f4" stroke="#333" stroke-width="1"/><path d="M77.500,180.5 h10.500 v10.500 M88,180.5 l3,-3.500" fill="none" stroke="#333" stroke-width="1"/><circle cx="221.500" cy="184" r="5.500" fill="#fff" stroke="#222" stroke-width="1.200"/><circle cx="221.500" cy="184" r="2.300" fill="#222"/><path d="M48.5,201.5 l8.500,6.500 l-8.500,6.500z" fill="#fff" stroke="#222" stroke-width="1.200"/><circle cx="75.5" cy="208" r="4.300" fill="none" stroke="#777" stroke-width="3"/><rect x="74.1" y="200.7" width="2.800" height="3" fill="#777" transform="rotate(0 75.5 208)"/><rect x="74.1" y="200.7" width="2.800" height="3" fill="#777" transform="rotate(45 75.5 208)"/><rect x="74.1" y="200.7" width="2.800" height="3" fill="#777" transform="rotate(90 75.5 208)"/><rect x="74.1" y="200.7" width="2.800" height="3" fill="#777" transform="rotate(135 75.5 208)"/><rect x="74.1" y="200.7" width="2.800" height="3" fill="#777" transform="rotate(180 75.5 208)"/><rect x="74.1" y="200.7" width="2.800" height="3" fill="#777" transform="rotate(225 75.5 208)"/><rect x="74.1" y="200.7" width="2.800" height="3" fill="#777" transform="rotate(270 75.5 208)"/><rect x="74.1" y="200.7" width="2.800" height="3" fill="#777" transform="rotate(315 75.5 208)"/><path d="M48.5,225.5 l8.500,6.500 l-8.500,6.500z" fill="#fff" stroke="#222" stroke-width="1.200"/><path d="M69,225 h6.500 l1.500,2 h8 v12 h-16z" fill="#9a9a9a"/><path d="M69,228.4 h16" stroke="#c8c8c8" stroke-width=".8"/><path d="M48.5,249.5 l8.500,6.500 l-8.500,6.500z" fill="#fff" stroke="#222" stroke-width="1.200"/><path d="M69,256 q8,-8.500 16,0 q-8,8.500 -16,0z" fill="none" stroke="#a4a4a4" stroke-width="1"/><circle cx="77" cy="256" r="2.800" fill="none" stroke="#a4a4a4" stroke-width="1"/><path d="M71.5,250.5 l11,11.500" stroke="#a4a4a4" stroke-width="1.200"/><path d="M94,249 h6.500 l1.500,2 h8 v12 h-16z" fill="#9a9a9a"/><path d="M94,252.4 h16" stroke="#c8c8c8" stroke-width=".8"/><path d="M58,274 v11.500 h-11.500z" fill="#777" stroke="#222" stroke-width="1"/><path d="M69,280 q8,-8.500 16,0 q-8,8.500 -16,0z" fill="#9a9a9a"/><circle cx="77" cy="280" r="3.400" fill="#f0f0f0"/><circle cx="77" cy="280" r="2" fill="#9a9a9a"/><path d="M94,273 h6.500 l1.500,2 h8 v12 h-16z" fill="#9a9a9a"/><path d="M94,276.4 h16" stroke="#c8c8c8" stroke-width=".8"/><path d="M66.5,297.5 l8.500,6.500 l-8.500,6.500z" fill="#fff" stroke="#222" stroke-width="1.200"/><path d="M87,304 q8,-8.500 16,0 q-8,8.500 -16,0z" fill="none" stroke="#a4a4a4" stroke-width="1"/><circle cx="95" cy="304" r="2.800" fill="none" stroke="#a4a4a4" stroke-width="1"/><path d="M89.5,298.5 l11,11.500" stroke="#a4a4a4" stroke-width="1.200"/><path d="M112,297 h6.500 l1.500,2 h8 v12 h-16z" fill="#9a9a9a"/><path d="M112,300.4 h16" stroke="#c8c8c8" stroke-width=".8"/><path d="M87,328 q8,-8.500 16,0 q-8,8.500 -16,0z" fill="#9a9a9a"/><circle cx="95" cy="328" r="3.400" fill="#f0f0f0"/><circle cx="95" cy="328" r="2" fill="#9a9a9a"/><path d="M112,321 h6.500 l1.500,2 h8 v12 h-16z" fill="#9a9a9a"/><path d="M112,324.4 h16" stroke="#c8c8c8" stroke-width=".8"/><path d="M87,352 q8,-8.500 16,0 q-8,8.500 -16,0z" fill="#9a9a9a"/><circle cx="95" cy="352" r="3.400" fill="#f0f0f0"/><circle cx="95" cy="352" r="2" fill="#9a9a9a"/><defs><linearGradient id="bg112_352" x1="0" x2="1"><stop offset="0" stop-color="#c8ccd4"/><stop offset=".6" stop-color="#f4f5f7"/><stop offset="1" stop-color="#fff"/></linearGradient></defs><rect x="112.5" y="344.5" width="15" height="15.500" rx="4" fill="#fff" stroke="#4a4f5a" stroke-width="1.100"/><path d="M115.5,350 h9 v7 q0,2 -2,2 h-5 q-2,0 -2,-2z" fill="url(#bg112_352)"/><path d="M87,376 q8,-8.500 16,0 q-8,8.500 -16,0z" fill="#9a9a9a"/><circle cx="95" cy="376" r="3.400" fill="#f0f0f0"/><circle cx="95" cy="376" r="2" fill="#9a9a9a"/><defs><linearGradient id="bg112_376" x1="0" x2="1"><stop offset="0" stop-color="#c8ccd4"/><stop offset=".6" stop-color="#f4f5f7"/><stop offset="1" stop-color="#fff"/></linearGradient></defs><rect x="112.5" y="368.5" width="15" height="15.500" rx="4" fill="#fff" stroke="#4a4f5a" stroke-width="1.100"/><path d="M115.5,374 h9 v7 q0,2 -2,2 h-5 q-2,0 -2,-2z" fill="url(#bg112_376)"/><path d="M87,400 q8,-8.500 16,0 q-8,8.500 -16,0z" fill="#9a9a9a"/><circle cx="95" cy="400" r="3.400" fill="#f0f0f0"/><circle cx="95" cy="400" r="2" fill="#9a9a9a"/><defs><linearGradient id="bg112_400" x1="0" x2="1"><stop offset="0" stop-color="#c8ccd4"/><stop offset=".6" stop-color="#f4f5f7"/><stop offset="1" stop-color="#fff"/></linearGradient></defs><rect x="112.5" y="392.5" width="15" height="15.500" rx="4" fill="#fff" stroke="#4a4f5a" stroke-width="1.100"/><path d="M115.5,398 h9 v7 q0,2 -2,2 h-5 q-2,0 -2,-2z" fill="url(#bg112_400)"/><path d="M87,424 q8,-8.500 16,0 q-8,8.500 -16,0z" fill="#9a9a9a"/><circle cx="95" cy="424" r="3.400" fill="#f0f0f0"/><circle cx="95" cy="424" r="2" fill="#9a9a9a"/><defs><linearGradient id="bg112_424" x1="0" x2="1"><stop offset="0" stop-color="#c8ccd4"/><stop offset=".6" stop-color="#f4f5f7"/><stop offset="1" stop-color="#fff"/></linearGradient></defs><rect x="112.5" y="416.5" width="15" height="15.500" rx="4" fill="#fff" stroke="#4a4f5a" stroke-width="1.100"/><path d="M115.5,422 h9 v7 q0,2 -2,2 h-5 q-2,0 -2,-2z" fill="url(#bg112_424)"/><path d="M87,448 q8,-8.500 16,0 q-8,8.500 -16,0z" fill="#9a9a9a"/><circle cx="95" cy="448" r="3.400" fill="#f0f0f0"/><circle cx="95" cy="448" r="2" fill="#9a9a9a"/><defs><linearGradient id="bg112_448" x1="0" x2="1"><stop offset="0" stop-color="#c8ccd4"/><stop offset=".6" stop-color="#f4f5f7"/><stop offset="1" stop-color="#fff"/></linearGradient></defs><rect x="112.5" y="440.5" width="15" height="15.500" rx="4" fill="#fff" stroke="#4a4f5a" stroke-width="1.100"/><path d="M115.5,446 h9 v7 q0,2 -2,2 h-5 q-2,0 -2,-2z" fill="url(#bg112_448)"/><path d="M87,472 q8,-8.500 16,0 q-8,8.500 -16,0z" fill="#9a9a9a"/><circle cx="95" cy="472" r="3.400" fill="#f0f0f0"/><circle cx="95" cy="472" r="2" fill="#9a9a9a"/><defs><linearGradient id="bg112_472" x1="0" x2="1"><stop offset="0" stop-color="#c8ccd4"/><stop offset=".6" stop-color="#f4f5f7"/><stop offset="1" stop-color="#fff"/></linearGradient></defs><rect x="112.5" y="464.5" width="15" height="15.500" rx="4" fill="#fff" stroke="#4a4f5a" stroke-width="1.100"/><path d="M115.5,470 h9 v7 q0,2 -2,2 h-5 q-2,0 -2,-2z" fill="url(#bg112_472)"/><path d="M87,496 q8,-8.500 16,0 q-8,8.500 -16,0z" fill="none" stroke="#a4a4a4" stroke-width="1"/><circle cx="95" cy="496" r="2.800" fill="none" stroke="#a4a4a4" stroke-width="1"/><path d="M89.5,490.5 l11,11.500" stroke="#a4a4a4" stroke-width="1.200"/><defs><linearGradient id="bg112_496" x1="0" x2="1"><stop offset="0" stop-color="#c8ccd4"/><stop offset=".6" stop-color="#f4f5f7"/><stop offset="1" stop-color="#fff"/></linearGradient></defs><rect x="112.5" y="488.5" width="15" height="15.500" rx="4" fill="#fff" stroke="#4a4f5a" stroke-width="1.100"/><path d="M115.5,494 h9 v7 q0,2 -2,2 h-5 q-2,0 -2,-2z" fill="url(#bg112_496)"/><path d="M87,520 q8,-8.500 16,0 q-8,8.500 -16,0z" fill="#9a9a9a"/><circle cx="95" cy="520" r="3.400" fill="#f0f0f0"/><circle cx="95" cy="520" r="2" fill="#9a9a9a"/><defs><linearGradient id="bg112_520" x1="0" x2="1"><stop offset="0" stop-color="#c8ccd4"/><stop offset=".6" stop-color="#f4f5f7"/><stop offset="1" stop-color="#fff"/></linearGradient></defs><rect x="112.5" y="512.5" width="15" height="15.500" rx="4" fill="#fff" stroke="#4a4f5a" stroke-width="1.100"/><path d="M115.5,518 h9 v7 q0,2 -2,2 h-5 q-2,0 -2,-2z" fill="url(#bg112_520)"/><path d="M87,544 q8,-8.500 16,0 q-8,8.500 -16,0z" fill="#9a9a9a"/><circle cx="95" cy="544" r="3.400" fill="#f0f0f0"/><circle cx="95" cy="544" r="2" fill="#9a9a9a"/><defs><linearGradient id="bg112_544" x1="0" x2="1"><stop offset="0" stop-color="#c8ccd4"/><stop offset=".6" stop-color="#f4f5f7"/><stop offset="1" stop-color="#fff"/></linearGradient></defs><rect x="112.5" y="536.5" width="15" height="15.500" rx="4" fill="#fff" stroke="#4a4f5a" stroke-width="1.100"/><path d="M115.5,542 h9 v7 q0,2 -2,2 h-5 q-2,0 -2,-2z" fill="url(#bg112_544)"/><path d="M87,568 q8,-8.500 16,0 q-8,8.500 -16,0z" fill="#9a9a9a"/><circle cx="95" cy="568" r="3.400" fill="#f0f0f0"/><circle cx="95" cy="568" r="2" fill="#9a9a9a"/><defs><linearGradient id="bg112_568" x1="0" x2="1"><stop offset="0" stop-color="#c8ccd4"/><stop offset=".6" stop-color="#f4f5f7"/><stop offset="1" stop-color="#fff"/></linearGradient></defs><rect x="112.5" y="560.5" width="15" height="15.500" rx="4" fill="#fff" stroke="#4a4f5a" stroke-width="1.100"/><path d="M115.5,566 h9 v7 q0,2 -2,2 h-5 q-2,0 -2,-2z" fill="url(#bg112_568)"/><path d="M87,592 q8,-8.500 16,0 q-8,8.500 -16,0z" fill="#9a9a9a"/><circle cx="95" cy="592" r="3.400" fill="#f0f0f0"/><circle cx="95" cy="592" r="2" fill="#9a9a9a"/><defs><linearGradient id="bg112_592" x1="0" x2="1"><stop offset="0" stop-color="#c8ccd4"/><stop offset=".6" stop-color="#f4f5f7"/><stop offset="1" stop-color="#fff"/></linearGradient></defs><rect x="112.5" y="584.5" width="15" height="15.500" rx="4" fill="#fff" stroke="#4a4f5a" stroke-width="1.100"/><path d="M115.5,590 h9 v7 q0,2 -2,2 h-5 q-2,0 -2,-2z" fill="url(#bg112_592)"/><path d="M87,616 q8,-8.500 16,0 q-8,8.500 -16,0z" fill="#9a9a9a"/><circle cx="95" cy="616" r="3.400" fill="#f0f0f0"/><circle cx="95" cy="616" r="2" fill="#9a9a9a"/><defs><linearGradient id="bg112_616" x1="0" x2="1"><stop offset="0" stop-color="#c8ccd4"/><stop offset=".6" stop-color="#f4f5f7"/><stop offset="1" stop-color="#fff"/></linearGradient></defs><rect x="112.5" y="608.5" width="15" height="15.500" rx="4" fill="#fff" stroke="#4a4f5a" stroke-width="1.100"/><path d="M115.5,614 h9 v7 q0,2 -2,2 h-5 q-2,0 -2,-2z" fill="url(#bg112_616)"/><path d="M87,640 q8,-8.500 16,0 q-8,8.500 -16,0z" fill="#9a9a9a"/><circle cx="95" cy="640" r="3.400" fill="#f0f0f0"/><circle cx="95" cy="640" r="2" fill="#9a9a9a"/><defs><linearGradient id="bg112_640" x1="0" x2="1"><stop offset="0" stop-color="#c8ccd4"/><stop offset=".6" stop-color="#f4f5f7"/><stop offset="1" stop-color="#fff"/></linearGradient></defs><rect x="112.5" y="632.5" width="15" height="15.500" rx="4" fill="#fff" stroke="#4a4f5a" stroke-width="1.100"/><path d="M115.5,638 h9 v7 q0,2 -2,2 h-5 q-2,0 -2,-2z" fill="url(#bg112_640)"/><path d="M87,664 q8,-8.500 16,0 q-8,8.500 -16,0z" fill="#9a9a9a"/><circle cx="95" cy="664" r="3.400" fill="#f0f0f0"/><circle cx="95" cy="664" r="2" fill="#9a9a9a"/><defs><linearGradient id="bg112_664" x1="0" x2="1"><stop offset="0" stop-color="#c8ccd4"/><stop offset=".6" stop-color="#f4f5f7"/><stop offset="1" stop-color="#fff"/></linearGradient></defs><rect x="112.5" y="656.5" width="15" height="15.500" rx="4" fill="#fff" stroke="#4a4f5a" stroke-width="1.100"/><path d="M115.5,662 h9 v7 q0,2 -2,2 h-5 q-2,0 -2,-2z" fill="url(#bg112_664)"/><path d="M87,688 q8,-8.500 16,0 q-8,8.500 -16,0z" fill="#9a9a9a"/><circle cx="95" cy="688" r="3.400" fill="#f0f0f0"/><circle cx="95" cy="688" r="2" fill="#9a9a9a"/><defs><linearGradient id="bg112_688" x1="0" x2="1"><stop offset="0" stop-color="#c8ccd4"/><stop offset=".6" stop-color="#f4f5f7"/><stop offset="1" stop-color="#fff"/></linearGradient></defs><rect x="112.5" y="680.5" width="15" height="15.500" rx="4" fill="#fff" stroke="#4a4f5a" stroke-width="1.100"/><path d="M115.5,686 h9 v7 q0,2 -2,2 h-5 q-2,0 -2,-2z" fill="url(#bg112_688)"/><path d="M87,712 q8,-8.500 16,0 q-8,8.500 -16,0z" fill="#9a9a9a"/><circle cx="95" cy="712" r="3.400" fill="#f0f0f0"/><circle cx="95" cy="712" r="2" fill="#9a9a9a"/><defs><linearGradient id="bg112_712" x1="0" x2="1"><stop offset="0" stop-color="#c8ccd4"/><stop offset=".6" stop-color="#f4f5f7"/><stop offset="1" stop-color="#fff"/></linearGradient></defs><rect x="112.5" y="704.5" width="15" height="15.500" rx="4" fill="#fff" stroke="#4a4f5a" stroke-width="1.100"/><path d="M115.5,710 h9 v7 q0,2 -2,2 h-5 q-2,0 -2,-2z" fill="url(#bg112_712)"/><path d="M87,736 q8,-8.500 16,0 q-8,8.500 -16,0z" fill="#9a9a9a"/><circle cx="95" cy="736" r="3.400" fill="#f0f0f0"/><circle cx="95" cy="736" r="2" fill="#9a9a9a"/><defs><linearGradient id="bg112_736" x1="0" x2="1"><stop offset="0" stop-color="#c8ccd4"/><stop offset=".6" stop-color="#f4f5f7"/><stop offset="1" stop-color="#fff"/></linearGradient></defs><rect x="112.5" y="728.5" width="15" height="15.500" rx="4" fill="#fff" stroke="#4a4f5a" stroke-width="1.100"/><path d="M115.5,734 h9 v7 q0,2 -2,2 h-5 q-2,0 -2,-2z" fill="url(#bg112_736)"/><path d="M87,760 q8,-8.500 16,0 q-8,8.500 -16,0z" fill="#9a9a9a"/><circle cx="95" cy="760" r="3.400" fill="#f0f0f0"/><circle cx="95" cy="760" r="2" fill="#9a9a9a"/><defs><linearGradient id="bg112_760" x1="0" x2="1"><stop offset="0" stop-color="#c8ccd4"/><stop offset=".6" stop-color="#f4f5f7"/><stop offset="1" stop-color="#fff"/></linearGradient></defs><rect x="112.5" y="752.5" width="15" height="15.500" rx="4" fill="#fff" stroke="#4a4f5a" stroke-width="1.100"/><path d="M115.5,758 h9 v7 q0,2 -2,2 h-5 q-2,0 -2,-2z" fill="url(#bg112_760)"/><path d="M87,784 q8,-8.500 16,0 q-8,8.500 -16,0z" fill="#9a9a9a"/><circle cx="95" cy="784" r="3.400" fill="#f0f0f0"/><circle cx="95" cy="784" r="2" fill="#9a9a9a"/><defs><linearGradient id="bg112_784" x1="0" x2="1"><stop offset="0" stop-color="#c8ccd4"/><stop offset=".6" stop-color="#f4f5f7"/><stop offset="1" stop-color="#fff"/></linearGradient></defs><rect x="112.5" y="776.5" width="15" height="15.500" rx="4" fill="#fff" stroke="#4a4f5a" stroke-width="1.100"/><path d="M115.5,782 h9 v7 q0,2 -2,2 h-5 q-2,0 -2,-2z" fill="url(#bg112_784)"/><path d="M87,808 q8,-8.500 16,0 q-8,8.500 -16,0z" fill="#9a9a9a"/><circle cx="95" cy="808" r="3.400" fill="#f0f0f0"/><circle cx="95" cy="808" r="2" fill="#9a9a9a"/><defs><linearGradient id="bg112_808" x1="0" x2="1"><stop offset="0" stop-color="#c8ccd4"/><stop offset=".6" stop-color="#f4f5f7"/><stop offset="1" stop-color="#fff"/></linearGradient></defs><rect x="112.5" y="800.5" width="15" height="15.500" rx="4" fill="#fff" stroke="#4a4f5a" stroke-width="1.100"/><path d="M115.5,806 h9 v7 q0,2 -2,2 h-5 q-2,0 -2,-2z" fill="url(#bg112_808)"/><path d="M87,832 q8,-8.500 16,0 q-8,8.500 -16,0z" fill="#9a9a9a"/><circle cx="95" cy="832" r="3.400" fill="#f0f0f0"/><circle cx="95" cy="832" r="2" fill="#9a9a9a"/><defs><linearGradient id="bg112_832" x1="0" x2="1"><stop offset="0" stop-color="#c8ccd4"/><stop offset=".6" stop-color="#f4f5f7"/><stop offset="1" stop-color="#fff"/></linearGradient></defs><rect x="112.5" y="824.5" width="15" height="15.500" rx="4" fill="#fff" stroke="#4a4f5a" stroke-width="1.100"/><path d="M115.5,830 h9 v7 q0,2 -2,2 h-5 q-2,0 -2,-2z" fill="url(#bg112_832)"/><path d="M48.5,849.5 l8.500,6.500 l-8.500,6.500z" fill="#fff" stroke="#222" stroke-width="1.200"/><path d="M69,856 q8,-8.500 16,0 q-8,8.500 -16,0z" fill="none" stroke="#a4a4a4" stroke-width="1"/><circle cx="77" cy="856" r="2.800" fill="none" stroke="#a4a4a4" stroke-width="1"/><path d="M71.5,850.5 l11,11.500" stroke="#a4a4a4" stroke-width="1.200"/><path d="M94,849 h6.500 l1.500,2 h8 v12 h-16z" fill="#9a9a9a"/><path d="M94,852.4 h16" stroke="#c8c8c8" stroke-width=".8"/><path d="M48.5,873.5 l8.500,6.500 l-8.500,6.500z" fill="#fff" stroke="#222" stroke-width="1.200"/><path d="M69,880 q8,-8.500 16,0 q-8,8.500 -16,0z" fill="#9a9a9a"/><circle cx="77" cy="880" r="3.400" fill="#f0f0f0"/><circle cx="77" cy="880" r="2" fill="#9a9a9a"/><path d="M94,873 h6.500 l1.500,2 h8 v12 h-16z" fill="#9a9a9a"/><path d="M94,876.4 h16" stroke="#c8c8c8" stroke-width=".8"/><path d="M69,909.5 h10 l3,-2.500 v2 l-3,3 h-10z" fill="#bdbdbd"/><path d="M69,899 l3,-2.500 h10 l-3,2.500z" fill="#9ad0f8"/><rect x="69" y="899" width="10" height="10.500" fill="#5fa8e6"/><path d="M79,899 l3,-2.500 v10.500 l-3,2.500z" fill="#3f86c9"/><path d="M84.5,909 v-12" stroke="#222" stroke-width="1"/><path d="M83,899 l1.500,-3 l1.500,3z" fill="#222"/><path d="M69,933.5 h10 l3,-2.500 v2 l-3,3 h-10z" fill="#bdbdbd"/><path d="M69,923 l3,-2.500 h10 l-3,2.500z" fill="#9ad0f8"/><rect x="69" y="923" width="10" height="10.500" fill="#5fa8e6"/><path d="M79,923 l3,-2.500 v10.500 l-3,2.500z" fill="#3f86c9"/><path d="M84.5,933 v-12" stroke="#222" stroke-width="1"/><path d="M83,923 l1.500,-3 l1.500,3z" fill="#222"/><path d="M69,957.5 h10 l3,-2.500 v2 l-3,3 h-10z" fill="#bdbdbd"/><path d="M69,947 l3,-2.500 h10 l-3,2.500z" fill="#9ad0f8"/><rect x="69" y="947" width="10" height="10.500" fill="#5fa8e6"/><path d="M79,947 l3,-2.500 v10.500 l-3,2.500z" fill="#3f86c9"/><path d="M84.5,957 v-12" stroke="#222" stroke-width="1"/><path d="M83,947 l1.500,-3 l1.500,3z" fill="#222"/><path d="M69,981.5 h10 l3,-2.500 v2 l-3,3 h-10z" fill="#bdbdbd"/><path d="M69,971 l3,-2.500 h10 l-3,2.500z" fill="#9ad0f8"/><rect x="69" y="971" width="10" height="10.500" fill="#5fa8e6"/><path d="M79,971 l3,-2.500 v10.500 l-3,2.500z" fill="#3f86c9"/><path d="M84.5,981 v-12" stroke="#222" stroke-width="1"/><path d="M83,971 l1.500,-3 l1.500,3z" fill="#222"/><path d="M69,1005.5 h10 l3,-2.500 v2 l-3,3 h-10z" fill="#bdbdbd"/><path d="M69,995 l3,-2.500 h10 l-3,2.500z" fill="#9ad0f8"/><rect x="69" y="995" width="10" height="10.500" fill="#5fa8e6"/><path d="M79,995 l3,-2.500 v10.500 l-3,2.500z" fill="#3f86c9"/><path d="M84.5,1005 v-12" stroke="#222" stroke-width="1"/><path d="M83,995 l1.500,-3 l1.500,3z" fill="#222"/><path d="M69,1029.5 h10 l3,-2.500 v2 l-3,3 h-10z" fill="#bdbdbd"/><path d="M69,1019 l3,-2.500 h10 l-3,2.500z" fill="#9ad0f8"/><rect x="69" y="1019" width="10" height="10.500" fill="#5fa8e6"/><path d="M79,1019 l3,-2.500 v10.500 l-3,2.500z" fill="#3f86c9"/><path d="M84.5,1029 v-12" stroke="#222" stroke-width="1"/><path d="M83,1019 l1.500,-3 l1.500,3z" fill="#222"/><path d="M69.5,1054.5 v-8 q1,-4 6,-5 l4,13z" fill="#dcdcdc" stroke="#444" stroke-width="1"/><path d="M75.5,1043 l5,-2.500 l4.500,11 l-5,3z" fill="#4a98dc"/><path d="M82,1041 l2.500,6" stroke="#222" stroke-width="1"/><path d="M69.5,1078.5 v-8 q1,-4 6,-5 l4,13z" fill="#dcdcdc" stroke="#444" stroke-width="1"/><path d="M75.5,1067 l5,-2.500 l4.500,11 l-5,3z" fill="#4a98dc"/><path d="M82,1065 l2.500,6" stroke="#222" stroke-width="1"/><path d="M69.5,1102.5 v-8 q1,-4 6,-5 l4,13z" fill="#dcdcdc" stroke="#444" stroke-width="1"/><path d="M75.5,1091 l5,-2.500 l4.500,11 l-5,3z" fill="#4a98dc"/><path d="M82,1089 l2.500,6" stroke="#222" stroke-width="1"/></svg>
<div class="abs" style="left:850px;top:1130px;width:237px;height:24px;background:#f0f0f0;opacity:.93"></div><svg class="abs" style="left:850px;top:1130px" width="240" height="24" viewBox="850 1130 240 24"><path d="M861,1134 v15 M858.500,1136.500 l2.500,-3 l2.500,3" fill="none" stroke="#333" stroke-width="1.200"/><ellipse cx="861" cy="1143" rx="7" ry="3" fill="none" stroke="#333" stroke-width="1.200"/><path d="M856,1148.500 l-2.500,-3 l3.500,-.8z" fill="#333"/><path d="M873.500,1140.500 h6 l-3,3.500z" fill="#333"/><rect x="886.500" y="1138.500" width="15" height="11" rx="1" fill="#f4f4f4" stroke="#333" stroke-width="1.100"/><rect x="889.500" y="1142.500" width="9" height="4" fill="#b8c0cc" stroke="#333" stroke-width=".8"/><path d="M887,1138 l3,-3 h6 l2,-1.500 l3,4.500" fill="#999" stroke="#777" stroke-width=".6"/><path d="M915,1149.500 q-3,-3 -4.500,-7 q1.500,-1.500 3,1 v-7 q1.200,-1.500 2.200,0 v-1.500 q1.200,-1.500 2.400,0 v1 q1.200,-1.300 2.400,.2 v1.500 q1.200,-1 2.200,.4 v7 q0,3 -2,4.500z" fill="#fff" stroke="#333" stroke-width="1"/><path d="M915.700,1136.500 v5 M918.100,1135.500 v6 M920.500,1136.500 v5" stroke="#333" stroke-width=".8"/><circle cx="942.500" cy="1141.500" r="4.500" fill="#dce8f6" stroke="#333" stroke-width="1.200"/><path d="M946,1145 l5,4.500" stroke="#333" stroke-width="2.200"/><path d="M949.500,1135.500 h4.500 M951.800,1133.300 v4.400 M949.500,1139.500 h4.500" stroke="#333" stroke-width="1"/><rect x="964.500" y="1134.500" width="15" height="14" fill="none" stroke="#333" stroke-width=".9" stroke-dasharray="2 1.500"/><circle cx="970.500" cy="1140.500" r="5.500" fill="#eef3fa" stroke="#333" stroke-width="1.200"/><path d="M974.500,1145 l5,4.500" stroke="#333" stroke-width="2.400"/><path d="M984.500,1140.500 h6 l-3,3.500z" fill="#333"/><rect x="997.500" y="1134.500" width="17" height="12" rx="1" fill="#7aa6dc" stroke="#333" stroke-width="1.200"/><rect x="1000" y="1137" width="12" height="7" fill="#a9c8ee"/><path d="M1003,1147 h6 l1.500,3 h-9z" fill="#333"/><path d="M1015.500,1140.500 h6 l-3,3.500z" fill="#333"/><rect x="1029.500" y="1133.500" width="15" height="15" fill="#fff" stroke="#333" stroke-width="1"/><path d="M1033.250,1133.500 v15 M1037,1133.500 v15 M1040.750,1133.500 v15 M1029.500,1137.250 h15 M1029.500,1141 h15 M1029.500,1144.750 h15" stroke="#333" stroke-width=".9"/><path d="M1046.500,1140.500 h6 l-3,3.500z" fill="#333"/><rect x="1059.5" y="1135.5" width="6.500" height="5.500" fill="#7aa6dc" stroke="#2a4a8a" stroke-width="1"/><rect x="1059.5" y="1142.0" width="6.500" height="5.500" fill="#7aa6dc" stroke="#2a4a8a" stroke-width="1"/><rect x="1067.0" y="1135.5" width="6.500" height="5.500" fill="#7aa6dc" stroke="#2a4a8a" stroke-width="1"/><rect x="1067.0" y="1142.0" width="6.500" height="5.500" fill="#7aa6dc" stroke="#2a4a8a" stroke-width="1"/><path d="M1077.500,1140.500 h6 l-3,3.500z" fill="#333"/></svg><div class="abs" style="left:8px;top:1160px;width:1920px;height:8px;background:#000"></div><div class="abs" style="left:56px;top:1160px;width:288px;height:8px;background:#f0f0f0"></div><div class="abs" style="left:738px;top:1160px;width:48px;height:8px;background:#333"></div><div class="abs" style="left:1826px;top:1165px;width:24px;height:3px;background:#999;opacity:.6"></div><div class="abs" style="left:1920px;top:1160px;width:1px;height:8px;background:#555"></div>
</body></html>
